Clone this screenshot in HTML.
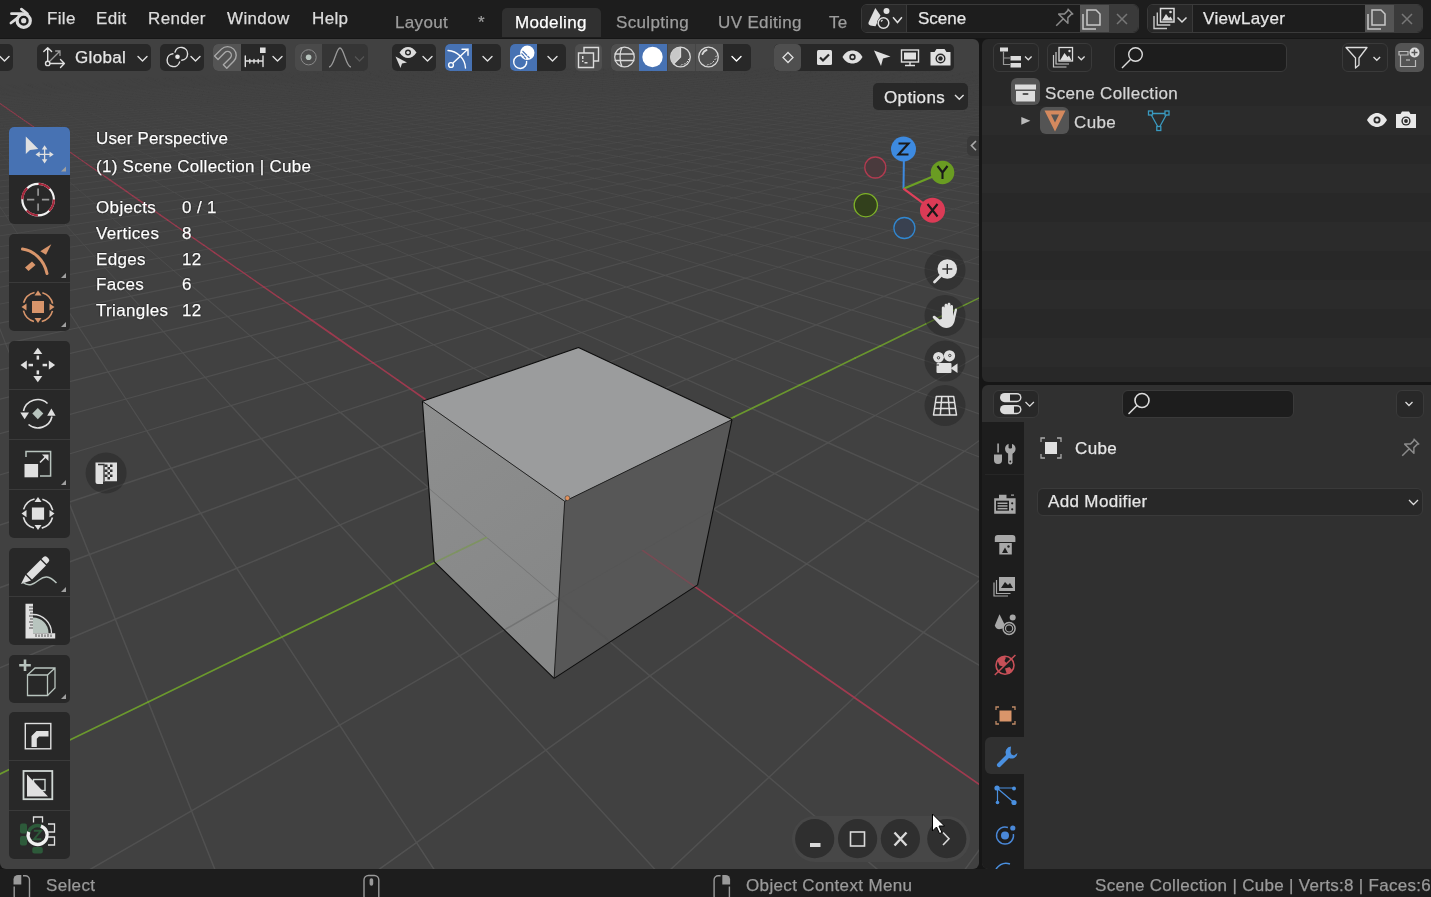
<!DOCTYPE html>
<html><head><meta charset="utf-8">
<style>
*{box-sizing:border-box;margin:0;padding:0}
html,body{-webkit-font-smoothing:antialiased;width:1431px;height:897px;overflow:hidden;background:#161616;font-family:"Liberation Sans",sans-serif;color:#e6e6e6}
.a{position:absolute}
.t{position:absolute;will-change:transform;-webkit-text-stroke:0.25px currentColor;margin-top:1px;white-space:pre;line-height:1;font-size:17px;letter-spacing:0.35px}
.ov{color:#fff;text-shadow:0 0 1.5px #000,0 0 1px #000}
#top{left:0;top:0;width:1431px;height:38px;background:#1d1d1d}
#vp{left:0;top:39px;width:979px;height:830px;background:#414141;border-radius:0 6px 6px 6px;overflow:hidden}
#ol{left:982px;top:39px;width:449px;height:343px;background:#282828;border-radius:6px 0 0 6px;overflow:hidden}
#pr{left:982px;top:385px;width:449px;height:484px;background:#303030;border-radius:6px 0 0 6px;overflow:hidden}
#sb{left:0;top:869px;width:1431px;height:28px;background:#1d1d1d}
.btn{position:absolute;background:#282828;border-radius:5px}
</style></head><body>
<div id="top" class="a">
<svg class="a" style="left:0;top:0" width="40" height="38">
<g stroke="#dcdcdc" stroke-width="2.8" stroke-linecap="round" fill="none">
<circle cx="23.7" cy="20.7" r="6.6" stroke-width="3.2"/>
<path d="M11.5 13.7H22M10.9 23L17 18.3M21.4 9.2L27.4 13.8"/>
</g><circle cx="23.7" cy="20.7" r="2.6" fill="#dcdcdc"/>
</svg>
<div class="t" style="left:47px;top:9px;color:#dcdcdc">File</div>
<div class="t" style="left:96px;top:9px;color:#dcdcdc">Edit</div>
<div class="t" style="left:148px;top:9px;color:#dcdcdc">Render</div>
<div class="t" style="left:227px;top:9px;color:#dcdcdc">Window</div>
<div class="t" style="left:312px;top:9px;color:#dcdcdc">Help</div>
<div class="a" style="left:502px;top:8px;width:99px;height:29px;background:#303030;border-radius:5px 5px 0 0"></div>
<div class="t" style="left:395px;top:13px;color:#9d9d9d">Layout</div>
<div class="t" style="left:478px;top:13px;color:#9d9d9d">*</div>
<div class="t" style="left:515px;top:13px;color:#ffffff">Modeling</div>
<div class="t" style="left:616px;top:13px;color:#9d9d9d">Sculpting</div>
<div class="t" style="left:718px;top:13px;color:#9d9d9d">UV Editing</div>
<div class="t" style="left:829px;top:13px;color:#9d9d9d">Te</div>
<!-- scene selector -->
<div class="a" style="left:861px;top:4px;width:278px;height:29px;border:1px solid #3a3a3a;border-radius:6px;background:#1d1d1d;overflow:hidden">
 <div class="a" style="left:0;top:0;width:45px;height:27px;background:#282828;border-right:1px solid #3a3a3a"></div>
 <div class="a" style="left:218px;top:0;width:29px;height:27px;background:#545454"></div>
 <div class="a" style="left:247px;top:0;width:30px;height:27px;background:#3a3a3a"></div>
</div>
<svg class="a" style="left:861px;top:4px" width="278" height="29">
 <path d="M14.3 4.1L7.6 18.3C6.8 20.5 8.5 22 14.5 22.2L19.5 11.5Z" fill="#e0e0e0"/>
 <circle cx="25.5" cy="6.9" r="3" fill="#e0e0e0"/>
 <circle cx="22.5" cy="19" r="6.4" fill="#282828"/>
 <circle cx="22.5" cy="19" r="5.3" fill="none" stroke="#e0e0e0" stroke-width="1.5"/>
 <path d="M20 17.5l1.5-1.5" stroke="#e0e0e0" stroke-width="1.2"/>
 <path d="M32 13.2l4.5 5.3 4.4-5.3" stroke="#e0e0e0" stroke-width="1.5" fill="none"/>
 <g transform="translate(203,14) rotate(45)" stroke="#8a8a8a" stroke-width="1.5" fill="none" stroke-linejoin="round"><path d="M-4 -9h8M-2.5 -9v6l-4 4h13l-4 -4v-6M0 1v10"/></g>
 <g stroke="#c8c8c8" stroke-width="1.5" fill="none"><path d="M222 10v15h13"/><path d="M226 6h9l4 4v11h-13z"/></g>
 <path d="M256 10l10 10M266 10l-10 10" stroke="#777" stroke-width="1.5"/>
</svg>
<div class="t" style="left:917.5px;top:9px;color:#e6e6e6;letter-spacing:0">Scene</div>
<!-- viewlayer selector -->
<div class="a" style="left:1147px;top:4px;width:276px;height:29px;border:1px solid #3a3a3a;border-radius:6px;background:#1d1d1d;overflow:hidden">
 <div class="a" style="left:0;top:0;width:45px;height:27px;background:#282828;border-right:1px solid #3a3a3a"></div>
 <div class="a" style="left:217px;top:0;width:29px;height:27px;background:#545454"></div>
 <div class="a" style="left:246px;top:0;width:30px;height:27px;background:#3a3a3a"></div>
</div>
<svg class="a" style="left:1147px;top:4px" width="276" height="29">
 <g stroke="#c8c8c8" stroke-width="1.4" fill="none"><path d="M7 12v12.5h13"/><path d="M10.3 8.5v12.5h13"/></g>
 <rect x="13.5" y="4.5" width="13.5" height="13.5" fill="#282828" stroke="#dcdcdc" stroke-width="1.5"/>
 <path d="M15 16.5L19 10L22 14L23.5 12.5L26 16.5Z" fill="#dcdcdc"/><circle cx="23.5" cy="8" r="1.3" fill="#dcdcdc"/>
 <path d="M30.5 13.5l4.5 4.5 4.5-4.5" stroke="#dcdcdc" stroke-width="1.5" fill="none"/>
 <g stroke="#c8c8c8" stroke-width="1.5" fill="none"><path d="M221 10v15h13"/><path d="M225 6h9l4 4v11h-13z"/></g>
 <path d="M255 10l10 10M265 10l-10 10" stroke="#777" stroke-width="1.5"/>
</svg>
<div class="t" style="left:1203px;top:9px;color:#e6e6e6">ViewLayer</div>
</div>
<div id="vp" class="a">
<svg class="a" style="left:0;top:0" width="979" height="830" viewBox="0 0 979 830">
<g id="gax"><g id="gridg" fill="none" stroke-width="1.2"><path d="M-9.8,45.3L6.3,44.4L22.1,43.5M-8.2,46.2L8.1,45.3L24.1,44.4L39.8,43.5L55.2,42.6L70.3,41.7L85.1,40.9L99.6,40.1L113.8,39.3M87.9,41.7L102.5,40.9L116.9,40.1L131.1,39.2L144.9,38.4L158.5,37.7L171.9,36.9L185.0,36.1M162.1,38.4L175.6,37.6L188.9,36.9L201.8,36.1L214.6,35.4L227.1,34.6M206.0,36.8L218.8,36.1L231.5,35.3L243.9,34.6L256.1,33.9L268.1,33.2M248.5,35.3L260.8,34.6L272.8,33.8L284.7,33.1L296.4,32.4M289.7,33.8L301.5,33.1L313.0,32.4L324.3,31.7M318.3,33.1L329.8,32.4L341.0,31.7L352.0,31.0M346.6,32.3L357.7,31.6L368.7,31.0L379.4,30.3M374.6,31.6L385.4,30.9L396.0,30.3L406.4,29.6M402.2,30.9L412.7,30.2L423.1,29.6L433.2,28.9M429.6,30.2L439.8,29.5L449.8,28.9M446.5,30.1L456.6,29.5L466.5,28.8L476.3,28.2M473.5,29.4L483.3,28.8L493.0,28.1M490.6,29.4L500.3,28.7L509.8,28.1M507.7,29.3L517.3,28.7L526.7,28.0L535.9,27.4M525.0,29.3L534.4,28.6L543.7,28.0L552.8,27.3M551.7,28.6L560.8,27.9L569.8,27.3M569.0,28.5L578.1,27.9L586.9,27.2M586.5,28.5L595.4,27.8L604.2,27.2M604.0,28.4L612.8,27.8L621.5,27.1M621.7,28.4L630.4,27.7L638.9,27.1M639.5,28.3L648.1,27.7L656.4,27.0M657.4,28.3L665.8,27.6L674.1,27.0M675.5,28.2L683.7,27.5M685.3,28.8L693.6,28.2L701.7,27.5M703.7,28.8L711.9,28.1L719.8,27.4M722.2,28.7L730.2,28.0L738.1,27.4M740.9,28.7L748.7,28.0M751.8,29.3L759.6,28.6L767.3,27.9M770.8,29.3L778.5,28.6L786.1,27.9M790.0,29.2L797.5,28.5M801.7,29.9L809.3,29.2L816.7,28.5M821.3,29.8L828.7,29.1L835.9,28.4M841.0,29.8L848.2,29.1M853.7,30.4L860.9,29.7L867.9,29.0M873.8,30.4L880.9,29.7M887.1,31.1L894.1,30.3L901.0,29.6M907.8,31.0L914.6,30.3M921.8,31.8L928.5,31.0L935.1,30.2M942.9,31.7L949.4,31.0M957.6,32.5L964.1,31.7L970.5,30.9M972.7,33.2L979.2,32.4L985.5,31.6M6.3,44.4L8.1,45.3M22.1,43.5L24.1,44.4M37.6,42.6L39.8,43.5L42.1,44.4M52.8,41.8L55.2,42.6L57.6,43.5M67.7,40.9L70.3,41.7L72.9,42.6M85.1,40.9L87.9,41.7M99.6,40.1L102.5,40.9M113.8,39.3L116.9,40.1M127.8,38.5L131.1,39.2L134.4,40.0M141.5,37.7L144.9,38.4L148.4,39.2M158.5,37.7L162.1,38.4M171.9,36.9L175.6,37.6M185.0,36.1L188.9,36.9L192.8,37.6M197.8,35.4L201.8,36.1L206.0,36.8M214.6,35.4L218.8,36.1M227.1,34.6L231.5,35.3L235.9,36.1M239.4,33.9L243.9,34.6L248.5,35.3M256.1,33.9L260.8,34.6M268.1,33.2L272.8,33.8L277.7,34.5M284.7,33.1L289.7,33.8M296.4,32.4L301.5,33.1L306.7,33.8M307.8,31.8L313.0,32.4L318.3,33.1M324.3,31.7L329.8,32.4M335.5,31.0L341.0,31.7L346.6,32.3M352.0,31.0L357.7,31.6M362.9,30.3L368.7,31.0L374.6,31.6M379.4,30.3L385.4,30.9M389.9,29.6L396.0,30.3L402.2,30.9M406.4,29.6L412.7,30.2L419.2,30.8M423.1,29.6L429.6,30.2M433.2,28.9L439.8,29.5L446.5,30.1M449.8,28.9L456.6,29.5L463.6,30.1M466.5,28.8L473.5,29.4M476.3,28.2L483.3,28.8L490.6,29.4M493.0,28.1L500.3,28.7L507.7,29.3M509.8,28.1L517.3,28.7L525.0,29.3M526.7,28.0L534.4,28.6M535.9,27.4L543.7,28.0L551.7,28.6M552.8,27.3L560.8,27.9L569.0,28.5M569.8,27.3L578.1,27.9L586.5,28.5M586.9,27.2L595.4,27.8L604.0,28.4M604.2,27.2L612.8,27.8L621.7,28.4M621.5,27.1L630.4,27.7L639.5,28.3M638.9,27.1L648.1,27.7L657.4,28.3M656.4,27.0L665.8,27.6L675.5,28.2L685.3,28.8M674.1,27.0L683.7,27.5L693.6,28.2L703.7,28.8M701.7,27.5L711.9,28.1L722.2,28.7M719.8,27.4L730.2,28.0L740.9,28.7M738.1,27.4L748.7,28.0L759.6,28.6L770.8,29.3M767.3,27.9L778.5,28.6L790.0,29.2M786.1,27.9L797.5,28.5L809.3,29.2L821.3,29.8M816.7,28.5L828.7,29.1L841.0,29.8L853.7,30.4M848.2,29.1L860.9,29.7L873.8,30.4L887.1,31.1M867.9,29.0L880.9,29.7L894.1,30.3L907.8,31.0L921.8,31.8M901.0,29.6L914.6,30.3L928.5,31.0L942.9,31.7L957.6,32.5M949.4,31.0L964.1,31.7L979.2,32.4L994.7,33.2" stroke="rgba(84,84,84,0.00)" stroke-width="0.9"/>
<path d="M-6.6,47.2L10.0,46.2L26.2,45.3L42.1,44.4L57.6,43.5L72.9,42.6L87.9,41.7M-22.0,49.2L-4.9,48.2L11.9,47.2L28.3,46.2L44.4,45.3L60.1,44.4L75.6,43.5L90.7,42.6L105.6,41.7L120.1,40.9L134.4,40.0L148.4,39.2L162.1,38.4M-20.5,50.2L-3.2,49.2L13.8,48.2L30.4,47.2L46.7,46.2L62.7,45.3L78.3,44.4L93.6,43.5L108.7,42.6L123.4,41.7L137.8,40.9L152.0,40.0L165.8,39.2L179.5,38.4L192.8,37.6L206.0,36.8M-19.0,51.3L-1.4,50.2L15.8,49.2L32.7,48.2L49.2,47.2L65.3,46.2L81.1,45.3L96.7,44.4L111.8,43.5L126.7,42.6L141.3,41.7L155.6,40.9L169.7,40.0L183.4,39.2L196.9,38.4L210.2,37.6L223.2,36.8L235.9,36.1L248.5,35.3M-17.4,52.4L0.4,51.3L17.9,50.3L35.0,49.2L51.7,48.2L68.0,47.2L84.1,46.3L99.7,45.3L115.1,44.4L130.2,43.5L144.9,42.6L159.4,41.7L173.6,40.8L187.5,40.0L201.1,39.2L214.5,38.4L227.6,37.6L240.5,36.8L253.2,36.0L265.6,35.3L277.7,34.5L289.7,33.8M-15.8,53.5L2.3,52.4L20.0,51.3L37.3,50.3L54.3,49.2L70.8,48.2L87.0,47.2L102.9,46.3L118.5,45.3L133.7,44.4L148.6,43.5L163.3,42.6L177.6,41.7L191.7,40.8L205.4,40.0L218.9,39.2L232.2,38.3L245.2,37.5L258.0,36.8L270.5,36.0L282.8,35.2L294.8,34.5L306.7,33.8L318.3,33.1M-14.1,54.7L4.3,53.6L22.2,52.4L39.8,51.4L56.9,50.3L73.7,49.3L90.1,48.2L106.2,47.2L121.9,46.3L137.4,45.3L152.5,44.4L167.2,43.5L181.7,42.6L195.9,41.7L209.9,40.8L223.5,40.0L236.9,39.1L250.0,38.3L262.9,37.5L275.5,36.7L287.9,36.0L300.1,35.2L312.0,34.5L323.8,33.7L335.3,33.0L346.6,32.3M-12.3,55.9L6.3,54.7L24.5,53.6L42.3,52.5L59.7,51.4L76.7,50.3L93.3,49.3L109.6,48.3L125.5,47.3L141.1,46.3L156.4,45.3L171.3,44.4L186.0,43.5L200.3,42.5L214.4,41.7L228.2,40.8L241.7,39.9L255.0,39.1L268.0,38.3L280.7,37.5L293.2,36.7L305.5,35.9L317.5,35.2L329.4,34.4L341.0,33.7L352.4,33.0L363.6,32.3L374.6,31.6M-10.5,57.2L8.4,56.0L26.8,54.8L44.8,53.6L62.5,52.5L79.7,51.4L96.6,50.3L113.0,49.3L129.2,48.3L145.0,47.3L160.4,46.3L175.5,45.3L190.3,44.4L204.9,43.4L219.1,42.5L233.0,41.7L246.6,40.8L260.0,39.9L273.2,39.1L286.0,38.3L298.6,37.5L311.0,36.7L323.2,35.9L335.1,35.2L346.8,34.4L358.3,33.7L369.6,33.0L380.7,32.3L391.5,31.6L402.2,30.9M10.5,57.2L29.2,56.0L47.5,54.8L65.4,53.7L82.9,52.5L99.9,51.4L116.6,50.4L133.0,49.3L148.9,48.3L164.6,47.3L179.9,46.3L194.8,45.3L209.5,44.4L223.9,43.4L237.9,42.5L251.7,41.6L265.2,40.8L278.5,39.9L291.5,39.1L304.2,38.3L316.7,37.5L329.0,36.7L341.0,35.9L352.8,35.1L364.4,34.4L375.7,33.6L386.9,32.9L397.8,32.2L408.6,31.5L419.2,30.8L429.6,30.2M120.3,51.5L136.8,50.4L153.0,49.3L168.8,48.3L184.3,47.3L199.5,46.3L214.3,45.3L228.8,44.4L243.0,43.4L257.0,42.5L270.6,41.6L284.0,40.8L297.1,39.9L309.9,39.1L322.5,38.2L334.9,37.4L347.0,36.6L358.9,35.9L370.6,35.1L382.0,34.3L393.3,33.6L404.3,32.9L415.1,32.2L425.8,31.5L436.2,30.8L446.5,30.1M188.9,48.3L204.2,47.3L219.2,46.3L233.9,45.3L248.2,44.4L262.3,43.4L276.1,42.5L289.6,41.6L302.8,40.7L315.8,39.9L328.5,39.0L341.0,38.2L353.2,37.4L365.2,36.6L376.9,35.8L388.5,35.1L399.8,34.3L410.9,33.6L421.8,32.8L432.6,32.1L443.1,31.4L453.4,30.7L463.6,30.1L473.5,29.4M253.6,45.3L267.8,44.4L281.8,43.4L295.4,42.5L308.7,41.6L321.8,40.7L334.7,39.9L347.2,39.0L359.5,38.2L371.6,37.4L383.5,36.6L395.1,35.8L406.5,35.0L417.7,34.3L428.7,33.5L439.5,32.8L450.1,32.1L460.5,31.4L470.7,30.7L480.7,30.0L490.6,29.4M287.6,44.4L301.3,43.4L314.8,42.5L328.0,41.6L341.0,40.7L353.6,39.9L366.1,39.0L378.3,38.2L390.2,37.4L401.9,36.6L413.4,35.8L424.7,35.0L435.7,34.2L446.6,33.5L457.3,32.8L467.7,32.1L478.0,31.4L488.1,30.7L498.0,30.0L507.7,29.3M321.1,43.4L334.4,42.5L347.5,41.6L360.2,40.7L372.8,39.8L385.1,39.0L397.1,38.1L408.9,37.3L420.5,36.5L431.8,35.7L443.0,35.0L453.9,34.2L464.6,33.5L475.1,32.7L485.5,32.0L495.6,31.3L505.6,30.6L515.4,29.9L525.0,29.3M354.1,42.5L367.0,41.6L379.7,40.7L392.0,39.8L404.2,39.0L416.1,38.1L427.7,37.3L439.2,36.5L450.4,35.7L461.4,34.9L472.2,34.2L482.7,33.4L493.1,32.7L503.3,32.0L513.4,31.3L523.2,30.6L532.9,29.9L542.3,29.2L551.7,28.6M386.7,41.6L399.2,40.7L411.4,39.8L423.4,38.9L435.2,38.1L446.7,37.3L458.0,36.5L469.0,35.7L479.9,34.9L490.5,34.1L501.0,33.4L511.3,32.7L521.3,31.9L531.2,31.2L540.9,30.5L550.5,29.8L559.8,29.2L569.0,28.5M418.9,40.7L431.0,39.8L442.8,38.9L454.4,38.1L465.8,37.3L476.9,36.4L487.8,35.6L498.6,34.9L509.1,34.1L519.4,33.4L529.5,32.6L539.4,31.9L549.2,31.2L558.8,30.5L568.2,29.8L577.4,29.1L586.5,28.5M450.7,39.8L462.4,38.9L473.8,38.1L485.0,37.2L496.0,36.4L506.8,35.6L517.3,34.8L527.7,34.1L537.9,33.3L547.9,32.6L557.7,31.8L567.3,31.1L576.7,30.4L586.0,29.7L595.1,29.1L604.0,28.4M470.5,39.8L482.0,38.9L493.3,38.0L504.4,37.2L515.2,36.4L525.8,35.6L536.3,34.8L546.5,34.0L556.5,33.3L566.4,32.5L576.0,31.8L585.5,31.1L594.8,30.4L603.9,29.7L612.9,29.0L621.7,28.4M490.5,39.7L501.9,38.9L513.0,38.0L523.9,37.2L534.6,36.4L545.0,35.6L555.3,34.8L565.4,34.0L575.3,33.2L585.0,32.5L594.5,31.8L603.8,31.0L613.0,30.3L622.0,29.7L630.8,29.0L639.5,28.3M521.8,38.8L532.8,38.0L543.5,37.2L554.0,36.3L564.4,35.5L574.5,34.7L584.4,34.0L594.2,33.2L603.7,32.5L613.1,31.7L622.3,31.0L631.3,30.3L640.2,29.6L648.9,28.9L657.4,28.3M541.9,38.8L552.7,38.0L563.3,37.1L573.7,36.3L583.8,35.5L593.8,34.7L603.6,33.9L613.2,33.2L622.6,32.4L631.8,31.7L640.9,31.0L649.7,30.3L658.5,29.6L667.0,28.9L675.5,28.2M562.2,38.8L572.8,37.9L583.2,37.1L593.4,36.3L603.4,35.5L613.3,34.7L622.9,33.9L632.3,33.1L641.6,32.4L650.6,31.6L659.6,30.9L668.3,30.2L676.9,29.5L685.3,28.8M582.6,38.8L593.1,37.9L603.3,37.1L613.4,36.2L623.2,35.4L632.8,34.6L642.3,33.8L651.6,33.1L660.7,32.3L669.6,31.6L678.4,30.9L687.0,30.2L695.4,29.5L703.7,28.8M603.2,38.8L613.5,37.9L623.5,37.0L633.4,36.2L643.1,35.4L652.6,34.6L661.9,33.8L671.0,33.0L679.9,32.3L688.7,31.5L697.3,30.8L705.8,30.1L714.1,29.4L722.2,28.7M623.9,38.7L634.0,37.9L643.9,37.0L653.6,36.2L663.1,35.4L672.4,34.6L681.6,33.8L690.5,33.0L699.3,32.2L708.0,31.5L716.4,30.8L724.7,30.1L732.9,29.4L740.9,28.7M644.8,38.7L654.7,37.8L664.4,37.0L673.9,36.2L683.3,35.3L692.4,34.5L701.4,33.7L710.2,33.0L718.9,32.2L727.3,31.5L735.6,30.7L743.8,30.0L751.8,29.3M665.8,38.7L675.5,37.8L685.1,37.0L694.4,36.1L703.6,35.3L712.6,34.5L721.4,33.7L730.0,32.9L738.5,32.2L746.8,31.4L755.0,30.7L763.0,30.0L770.8,29.3M687.0,38.7L696.5,37.8L705.9,36.9L715.1,36.1L724.1,35.3L732.9,34.5L741.5,33.7L750.0,32.9L758.3,32.1L766.5,31.4L774.4,30.6L782.3,29.9L790.0,29.2M708.3,38.7L717.7,37.8L726.9,36.9L735.9,36.1L744.7,35.2L753.3,34.4L761.8,33.6L770.1,32.8L778.2,32.1L786.2,31.3L794.0,30.6L801.7,29.9M720.4,39.5L729.8,38.6L739.0,37.7L748.0,36.9L756.8,36.0L765.5,35.2L773.9,34.4L782.2,33.6L790.3,32.8L798.3,32.0L806.1,31.3L813.8,30.5L821.3,29.8M742.3,39.5L751.5,38.6L760.5,37.7L769.3,36.9L777.9,36.0L786.4,35.2L794.7,34.3L802.8,33.5L810.7,32.8L818.5,32.0L826.2,31.2L833.7,30.5L841.0,29.8M764.3,39.5L773.3,38.6L782.1,37.7L790.7,36.8L799.2,36.0L807.5,35.1L815.5,34.3L823.5,33.5L831.3,32.7L838.9,31.9L846.4,31.2L853.7,30.4M777.6,40.4L786.6,39.5L795.3,38.6L803.9,37.7L812.4,36.8L820.6,35.9L828.7,35.1L836.6,34.3L844.3,33.5L851.9,32.7L859.4,31.9L866.7,31.1L873.8,30.4M800.2,40.4L808.9,39.5L817.5,38.5L825.9,37.6L834.1,36.8L842.2,35.9L850.1,35.1L857.8,34.2L865.3,33.4L872.8,32.6L880.0,31.9L887.1,31.1M822.9,40.4L831.5,39.4L839.9,38.5L848.1,37.6L856.1,36.7L863.9,35.9L871.6,35.0L879.1,34.2L886.5,33.4L893.7,32.6L900.8,31.8L907.8,31.0M837.4,41.3L845.9,40.4L854.2,39.4L862.4,38.5L870.4,37.6L878.2,36.7L885.8,35.8L893.3,35.0L900.6,34.2L907.8,33.3L914.9,32.5L921.8,31.8M860.7,41.3L869.0,40.4L877.2,39.4L885.1,38.5L892.9,37.6L900.5,36.7L907.9,35.8L915.2,35.0L922.3,34.1L929.3,33.3L936.1,32.5L942.9,31.7M876.1,42.3L884.3,41.3L892.4,40.3L900.3,39.4L908.0,38.5L915.5,37.5L922.9,36.6L930.1,35.8L937.2,34.9L944.1,34.1L950.9,33.3L957.6,32.5M900.0,42.3L908.0,41.3L915.9,40.3L923.5,39.4L931.0,38.4L938.4,37.5L945.5,36.6L952.5,35.7L959.4,34.9L966.1,34.0L972.7,33.2M916.3,43.3L924.2,42.3L932.0,41.3L939.6,40.3L947.0,39.3L954.3,38.4L961.4,37.5L968.3,36.6L975.1,35.7L981.8,34.8L988.3,34.0M940.9,43.3L948.6,42.3L956.1,41.3L963.5,40.3L970.7,39.3L977.7,38.4L984.6,37.5M958.1,44.4L965.7,43.3L973.2,42.3L980.5,41.3L987.6,40.3M983.5,44.4L990.8,43.3M-6.6,47.2L-4.9,48.2L-3.2,49.2L-1.4,50.2L0.4,51.3L2.3,52.4L4.3,53.6L6.3,54.7L8.4,56.0L10.5,57.2M8.1,45.3L10.0,46.2L11.9,47.2L13.8,48.2L15.8,49.2L17.9,50.3L20.0,51.3L22.2,52.4L24.5,53.6L26.8,54.8L29.2,56.0M24.1,44.4L26.2,45.3L28.3,46.2L30.4,47.2L32.7,48.2L35.0,49.2L37.3,50.3L39.8,51.4L42.3,52.5L44.8,53.6L47.5,54.8M42.1,44.4L44.4,45.3L46.7,46.2L49.2,47.2L51.7,48.2L54.3,49.2L56.9,50.3L59.7,51.4L62.5,52.5L65.4,53.7M57.6,43.5L60.1,44.4L62.7,45.3L65.3,46.2L68.0,47.2L70.8,48.2L73.7,49.3L76.7,50.3L79.7,51.4L82.9,52.5L86.1,53.7M72.9,42.6L75.6,43.5L78.3,44.4L81.1,45.3L84.1,46.3L87.0,47.2L90.1,48.2L93.3,49.3L96.6,50.3L99.9,51.4L103.4,52.6M87.9,41.7L90.7,42.6L93.6,43.5L96.7,44.4L99.7,45.3L102.9,46.3L106.2,47.2L109.6,48.3L113.0,49.3L116.6,50.4L120.3,51.5M102.5,40.9L105.6,41.7L108.7,42.6L111.8,43.5L115.1,44.4L118.5,45.3L121.9,46.3L125.5,47.3L129.2,48.3L133.0,49.3L136.8,50.4M116.9,40.1L120.1,40.9L123.4,41.7L126.7,42.6L130.2,43.5L133.7,44.4L137.4,45.3L141.1,46.3L145.0,47.3L148.9,48.3L153.0,49.3M134.4,40.0L137.8,40.9L141.3,41.7L144.9,42.6L148.6,43.5L152.5,44.4L156.4,45.3L160.4,46.3L164.6,47.3L168.8,48.3L173.2,49.4M148.4,39.2L152.0,40.0L155.6,40.9L159.4,41.7L163.3,42.6L167.2,43.5L171.3,44.4L175.5,45.3L179.9,46.3L184.3,47.3L188.9,48.3M162.1,38.4L165.8,39.2L169.7,40.0L173.6,40.8L177.6,41.7L181.7,42.6L186.0,43.5L190.3,44.4L194.8,45.3L199.5,46.3L204.2,47.3M175.6,37.6L179.5,38.4L183.4,39.2L187.5,40.0L191.7,40.8L195.9,41.7L200.3,42.5L204.9,43.4L209.5,44.4L214.3,45.3L219.2,46.3M192.8,37.6L196.9,38.4L201.1,39.2L205.4,40.0L209.9,40.8L214.4,41.7L219.1,42.5L223.9,43.4L228.8,44.4L233.9,45.3L239.1,46.3M206.0,36.8L210.2,37.6L214.5,38.4L218.9,39.2L223.5,40.0L228.2,40.8L233.0,41.7L237.9,42.5L243.0,43.4L248.2,44.4L253.6,45.3M218.8,36.1L223.2,36.8L227.6,37.6L232.2,38.3L236.9,39.1L241.7,39.9L246.6,40.8L251.7,41.6L257.0,42.5L262.3,43.4L267.8,44.4L273.5,45.3M235.9,36.1L240.5,36.8L245.2,37.5L250.0,38.3L255.0,39.1L260.0,39.9L265.2,40.8L270.6,41.6L276.1,42.5L281.8,43.4L287.6,44.4M248.5,35.3L253.2,36.0L258.0,36.8L262.9,37.5L268.0,38.3L273.2,39.1L278.5,39.9L284.0,40.8L289.6,41.6L295.4,42.5L301.3,43.4M260.8,34.6L265.6,35.3L270.5,36.0L275.5,36.7L280.7,37.5L286.0,38.3L291.5,39.1L297.1,39.9L302.8,40.7L308.7,41.6L314.8,42.5L321.1,43.4M277.7,34.5L282.8,35.2L287.9,36.0L293.2,36.7L298.6,37.5L304.2,38.3L309.9,39.1L315.8,39.9L321.8,40.7L328.0,41.6L334.4,42.5M289.7,33.8L294.8,34.5L300.1,35.2L305.5,35.9L311.0,36.7L316.7,37.5L322.5,38.2L328.5,39.0L334.7,39.9L341.0,40.7L347.5,41.6L354.1,42.5M306.7,33.8L312.0,34.5L317.5,35.2L323.2,35.9L329.0,36.7L334.9,37.4L341.0,38.2L347.2,39.0L353.6,39.9L360.2,40.7L367.0,41.6M318.3,33.1L323.8,33.7L329.4,34.4L335.1,35.2L341.0,35.9L347.0,36.6L353.2,37.4L359.5,38.2L366.1,39.0L372.8,39.8L379.7,40.7L386.7,41.6M329.8,32.4L335.3,33.0L341.0,33.7L346.8,34.4L352.8,35.1L358.9,35.9L365.2,36.6L371.6,37.4L378.3,38.2L385.1,39.0L392.0,39.8L399.2,40.7M346.6,32.3L352.4,33.0L358.3,33.7L364.4,34.4L370.6,35.1L376.9,35.8L383.5,36.6L390.2,37.4L397.1,38.1L404.2,39.0L411.4,39.8L418.9,40.7M357.7,31.6L363.6,32.3L369.6,33.0L375.7,33.6L382.0,34.3L388.5,35.1L395.1,35.8L401.9,36.6L408.9,37.3L416.1,38.1L423.4,38.9L431.0,39.8L438.8,40.7M374.6,31.6L380.7,32.3L386.9,32.9L393.3,33.6L399.8,34.3L406.5,35.0L413.4,35.8L420.5,36.5L427.7,37.3L435.2,38.1L442.8,38.9L450.7,39.8M385.4,30.9L391.5,31.6L397.8,32.2L404.3,32.9L410.9,33.6L417.7,34.3L424.7,35.0L431.8,35.7L439.2,36.5L446.7,37.3L454.4,38.1L462.4,38.9L470.5,39.8M402.2,30.9L408.6,31.5L415.1,32.2L421.8,32.8L428.7,33.5L435.7,34.2L443.0,35.0L450.4,35.7L458.0,36.5L465.8,37.3L473.8,38.1L482.0,38.9L490.5,39.7M419.2,30.8L425.8,31.5L432.6,32.1L439.5,32.8L446.6,33.5L453.9,34.2L461.4,34.9L469.0,35.7L476.9,36.4L485.0,37.2L493.3,38.0L501.9,38.9M429.6,30.2L436.2,30.8L443.1,31.4L450.1,32.1L457.3,32.8L464.6,33.5L472.2,34.2L479.9,34.9L487.8,35.6L496.0,36.4L504.4,37.2L513.0,38.0L521.8,38.8M446.5,30.1L453.4,30.7L460.5,31.4L467.7,32.1L475.1,32.7L482.7,33.4L490.5,34.1L498.6,34.9L506.8,35.6L515.2,36.4L523.9,37.2L532.8,38.0L541.9,38.8M463.6,30.1L470.7,30.7L478.0,31.4L485.5,32.0L493.1,32.7L501.0,33.4L509.1,34.1L517.3,34.8L525.8,35.6L534.6,36.4L543.5,37.2L552.7,38.0L562.2,38.8M473.5,29.4L480.7,30.0L488.1,30.7L495.6,31.3L503.3,32.0L511.3,32.7L519.4,33.4L527.7,34.1L536.3,34.8L545.0,35.6L554.0,36.3L563.3,37.1L572.8,37.9L582.6,38.8M490.6,29.4L498.0,30.0L505.6,30.6L513.4,31.3L521.3,31.9L529.5,32.6L537.9,33.3L546.5,34.0L555.3,34.8L564.4,35.5L573.7,36.3L583.2,37.1L593.1,37.9L603.2,38.8M507.7,29.3L515.4,29.9L523.2,30.6L531.2,31.2L539.4,31.9L547.9,32.6L556.5,33.3L565.4,34.0L574.5,34.7L583.8,35.5L593.4,36.3L603.3,37.1L613.5,37.9L623.9,38.7M525.0,29.3L532.9,29.9L540.9,30.5L549.2,31.2L557.7,31.8L566.4,32.5L575.3,33.2L584.4,34.0L593.8,34.7L603.4,35.5L613.4,36.2L623.5,37.0L634.0,37.9L644.8,38.7M534.4,28.6L542.3,29.2L550.5,29.8L558.8,30.5L567.3,31.1L576.0,31.8L585.0,32.5L594.2,33.2L603.6,33.9L613.3,34.7L623.2,35.4L633.4,36.2L643.9,37.0L654.7,37.8L665.8,38.7M551.7,28.6L559.8,29.2L568.2,29.8L576.7,30.4L585.5,31.1L594.5,31.8L603.7,32.5L613.2,33.2L622.9,33.9L632.8,34.6L643.1,35.4L653.6,36.2L664.4,37.0L675.5,37.8L687.0,38.7M569.0,28.5L577.4,29.1L586.0,29.7L594.8,30.4L603.8,31.0L613.1,31.7L622.6,32.4L632.3,33.1L642.3,33.8L652.6,34.6L663.1,35.4L673.9,36.2L685.1,37.0L696.5,37.8L708.3,38.7L720.4,39.5M586.5,28.5L595.1,29.1L603.9,29.7L613.0,30.3L622.3,31.0L631.8,31.7L641.6,32.4L651.6,33.1L661.9,33.8L672.4,34.6L683.3,35.3L694.4,36.1L705.9,36.9L717.7,37.8L729.8,38.6L742.3,39.5M604.0,28.4L612.9,29.0L622.0,29.7L631.3,30.3L640.9,31.0L650.6,31.6L660.7,32.3L671.0,33.0L681.6,33.8L692.4,34.5L703.6,35.3L715.1,36.1L726.9,36.9L739.0,37.7L751.5,38.6L764.3,39.5M621.7,28.4L630.8,29.0L640.2,29.6L649.7,30.3L659.6,30.9L669.6,31.6L679.9,32.3L690.5,33.0L701.4,33.7L712.6,34.5L724.1,35.3L735.9,36.1L748.0,36.9L760.5,37.7L773.3,38.6L786.6,39.5L800.2,40.4M639.5,28.3L648.9,28.9L658.5,29.6L668.3,30.2L678.4,30.9L688.7,31.5L699.3,32.2L710.2,33.0L721.4,33.7L732.9,34.5L744.7,35.2L756.8,36.0L769.3,36.9L782.1,37.7L795.3,38.6L808.9,39.5L822.9,40.4L837.4,41.3M657.4,28.3L667.0,28.9L676.9,29.5L687.0,30.2L697.3,30.8L708.0,31.5L718.9,32.2L730.0,32.9L741.5,33.7L753.3,34.4L765.5,35.2L777.9,36.0L790.7,36.8L803.9,37.7L817.5,38.5L831.5,39.4L845.9,40.4L860.7,41.3M685.3,28.8L695.4,29.5L705.8,30.1L716.4,30.8L727.3,31.5L738.5,32.2L750.0,32.9L761.8,33.6L773.9,34.4L786.4,35.2L799.2,36.0L812.4,36.8L825.9,37.6L839.9,38.5L854.2,39.4L869.0,40.4L884.3,41.3L900.0,42.3M703.7,28.8L714.1,29.4L724.7,30.1L735.6,30.7L746.8,31.4L758.3,32.1L770.1,32.8L782.2,33.6L794.7,34.3L807.5,35.1L820.6,35.9L834.1,36.8L848.1,37.6L862.4,38.5L877.2,39.4L892.4,40.3L908.0,41.3L924.2,42.3L940.9,43.3L958.1,44.4M722.2,28.7L732.9,29.4L743.8,30.0L755.0,30.7L766.5,31.4L778.2,32.1L790.3,32.8L802.8,33.5L815.5,34.3L828.7,35.1L842.2,35.9L856.1,36.7L870.4,37.6L885.1,38.5L900.3,39.4L915.9,40.3L932.0,41.3L948.6,42.3L965.7,43.3L983.5,44.4L1001.7,45.5M740.9,28.7L751.8,29.3L763.0,30.0L774.4,30.6L786.2,31.3L798.3,32.0L810.7,32.8L823.5,33.5L836.6,34.3L850.1,35.1L863.9,35.9L878.2,36.7L892.9,37.6L908.0,38.5L923.5,39.4L939.6,40.3L956.1,41.3L973.2,42.3L990.8,43.3M770.8,29.3L782.3,29.9L794.0,30.6L806.1,31.3L818.5,32.0L831.3,32.7L844.3,33.5L857.8,34.2L871.6,35.0L885.8,35.8L900.5,36.7L915.5,37.5L931.0,38.4L947.0,39.3L963.5,40.3L980.5,41.3L998.0,42.3M790.0,29.2L801.7,29.9L813.8,30.5L826.2,31.2L838.9,31.9L851.9,32.7L865.3,33.4L879.1,34.2L893.3,35.0L907.9,35.8L922.9,36.6L938.4,37.5L954.3,38.4L970.7,39.3L987.6,40.3M821.3,29.8L833.7,30.5L846.4,31.2L859.4,31.9L872.8,32.6L886.5,33.4L900.6,34.2L915.2,35.0L930.1,35.8L945.5,36.6L961.4,37.5L977.7,38.4L994.5,39.3M853.7,30.4L866.7,31.1L880.0,31.9L893.7,32.6L907.8,33.3L922.3,34.1L937.2,34.9L952.5,35.7L968.3,36.6L984.6,37.5M887.1,31.1L900.8,31.8L914.9,32.5L929.3,33.3L944.1,34.1L959.4,34.9L975.1,35.7L991.3,36.6M921.8,31.8L936.1,32.5L950.9,33.3L966.1,34.0L981.8,34.8L997.9,35.7M957.6,32.5L972.7,33.2L988.3,34.0" stroke="rgba(84,84,84,0.05)" stroke-width="0.9"/>
<path d="M-8.7,58.5L10.5,57.2M-6.8,59.8L12.7,58.5L31.7,57.3L50.3,56.1L68.4,54.9L86.1,53.7L103.4,52.6L120.3,51.5M-25.0,62.5L-4.8,61.2L15.0,59.9L34.3,58.6L53.1,57.3L71.5,56.1L89.4,54.9L107.0,53.8L124.1,52.6L140.9,51.5L157.2,50.4L173.2,49.4L188.9,48.3M-23.3,64.0L-2.7,62.6L17.4,61.2L36.9,59.9L56.0,58.6L74.7,57.4L92.9,56.2L110.7,55.0L128.0,53.8L145.0,52.6L161.6,51.5L177.8,50.4L193.6,49.4L209.1,48.3L224.3,47.3L239.1,46.3L253.6,45.3M-21.5,65.5L-0.6,64.1L19.8,62.7L39.7,61.3L59.1,60.0L78.0,58.7L96.5,57.4L114.5,56.2L132.1,55.0L149.3,53.8L166.0,52.7L182.4,51.6L198.5,50.5L214.2,49.4L229.5,48.3L244.5,47.3L259.2,46.3L273.5,45.3L287.6,44.4M-19.7,67.1L1.6,65.6L22.3,64.2L42.5,62.8L62.2,61.4L81.4,60.1L100.1,58.8L118.4,57.5L136.2,56.3L153.7,55.0L170.7,53.9L187.3,52.7L203.5,51.6L219.4,50.5L234.9,49.4L250.0,48.4L264.9,47.3L279.4,46.3L293.6,45.3L307.5,44.4L321.1,43.4M-17.7,68.7L3.9,67.2L25.0,65.7L45.5,64.3L65.5,62.8L84.9,61.5L103.9,60.1L122.5,58.8L140.6,57.6L158.2,56.3L175.4,55.1L192.2,53.9L208.7,52.8L224.7,51.6L240.4,50.5L255.7,49.4L270.7,48.4L285.4,47.3L299.7,46.3L313.8,45.3L327.5,44.4L341.0,43.4L354.1,42.5M88.6,62.9L107.9,61.6L126.7,60.2L145.0,58.9L162.9,57.6L180.4,56.4L197.4,55.1L214.0,53.9L230.3,52.8L246.1,51.6L261.6,50.5L276.8,49.5L291.6,48.4L306.1,47.4L320.3,46.3L334.1,45.3L347.7,44.4L361.0,43.4L374.0,42.5L386.7,41.6M185.4,57.7L202.7,56.4L219.5,55.2L236.0,54.0L252.0,52.8L267.7,51.7L283.0,50.6L298.0,49.5L312.6,48.4L327.0,47.4L341.0,46.3L354.7,45.3L368.1,44.4L381.2,43.4L394.0,42.5L406.6,41.6L418.9,40.7M241.9,55.2L258.1,54.0L274.0,52.9L289.5,51.7L304.6,50.6L319.4,49.5L333.8,48.4L348.0,47.4L361.8,46.4L375.3,45.3L388.6,44.4L401.5,43.4L414.2,42.5L426.6,41.6L438.8,40.7L450.7,39.8M296.1,52.9L311.4,51.7L326.3,50.6L340.9,49.5L355.2,48.4L369.2,47.4L382.8,46.4L396.2,45.4L409.2,44.4L422.0,43.4L434.5,42.5L446.8,41.5L458.8,40.6L470.5,39.8M333.5,51.8L348.3,50.6L362.7,49.5L376.8,48.5L390.5,47.4L404.0,46.4L417.2,45.4L430.1,44.4L442.7,43.4L455.0,42.5L467.1,41.5L478.9,40.6L490.5,39.7M370.4,50.7L384.6,49.6L398.5,48.5L412.1,47.4L425.4,46.4L438.3,45.4L451.0,44.4L463.5,43.4L475.6,42.4L487.6,41.5L499.2,40.6L510.6,39.7L521.8,38.8M406.7,49.6L420.4,48.5L433.8,47.4L446.9,46.4L459.7,45.4L472.2,44.4L484.5,43.4L496.4,42.4L508.2,41.5L519.7,40.6L530.9,39.7L541.9,38.8M429.0,49.6L442.5,48.5L455.7,47.4L468.6,46.4L481.2,45.4L493.5,44.4L505.6,43.4L517.4,42.4L529.0,41.5L540.3,40.6L551.3,39.7L562.2,38.8M464.8,48.5L477.8,47.4L490.5,46.4L502.9,45.4L515.0,44.4L526.9,43.4L538.5,42.4L549.9,41.5L561.0,40.6L571.9,39.7L582.6,38.8M487.2,48.5L500.0,47.5L512.5,46.4L524.7,45.4L536.7,44.4L548.4,43.4L559.8,42.4L571.0,41.5L581.9,40.6L592.7,39.6L603.2,38.8M522.4,47.5L534.7,46.4L546.7,45.4L558.5,44.4L570.0,43.4L581.2,42.4L592.2,41.5L603.0,40.5L613.6,39.6L623.9,38.7M545.1,47.5L557.1,46.4L569.0,45.4L580.5,44.4L591.8,43.4L602.9,42.4L613.7,41.5L624.3,40.5L634.6,39.6L644.8,38.7M567.9,47.5L579.7,46.4L591.3,45.4L602.7,44.4L613.8,43.4L624.6,42.4L635.3,41.4L645.7,40.5L655.8,39.6L665.8,38.7M590.9,47.5L602.5,46.4L613.9,45.4L625.0,44.4L635.9,43.4L646.6,42.4L657.0,41.4L667.2,40.5L677.2,39.6L687.0,38.7M614.0,47.5L625.5,46.4L636.7,45.4L647.6,44.4L658.3,43.4L668.7,42.4L678.9,41.4L688.9,40.5L698.7,39.6L708.3,38.7M637.4,47.5L648.6,46.5L659.6,45.4L670.3,44.4L680.8,43.4L691.0,42.4L701.0,41.4L710.8,40.5L720.4,39.5M661.0,47.5L672.0,46.5L682.7,45.4L693.2,44.4L703.5,43.4L713.5,42.4L723.3,41.4L732.9,40.4L742.3,39.5M684.8,47.6L695.5,46.5L706.1,45.4L716.3,44.4L726.4,43.3L736.2,42.4L745.8,41.4L755.2,40.4L764.3,39.5M698.0,48.7L708.8,47.6L719.3,46.5L729.6,45.4L739.6,44.4L749.4,43.3L759.0,42.3L768.4,41.4L777.6,40.4M722.4,48.7L732.9,47.6L743.2,46.5L753.3,45.4L763.1,44.4L772.7,43.3L782.0,42.3L791.2,41.4L800.2,40.4M747.1,48.7L757.3,47.6L767.4,46.5L777.2,45.4L786.8,44.4L796.1,43.3L805.3,42.3L814.2,41.3L822.9,40.4M771.9,48.8L781.9,47.6L791.7,46.5L801.3,45.4L810.6,44.4L819.8,43.3L828.7,42.3L837.4,41.3M787.0,49.9L797.0,48.8L806.8,47.6L816.3,46.5L825.6,45.4L834.7,44.4L843.6,43.3L852.3,42.3L860.7,41.3M812.6,50.0L822.3,48.8L831.8,47.6L841.1,46.5L850.1,45.4L859.0,44.4L867.6,43.3L876.1,42.3M838.4,50.0L847.8,48.8L857.1,47.7L866.1,46.5L874.9,45.4L883.4,44.4L891.8,43.3L900.0,42.3M855.0,51.2L864.4,50.0L873.6,48.8L882.5,47.7L891.3,46.5L899.8,45.4L908.1,44.4L916.3,43.3M881.5,51.3L890.7,50.0L899.5,48.8L908.2,47.7L916.7,46.6L925.0,45.4L933.0,44.4L940.9,43.3M899.3,52.6L908.3,51.3L917.2,50.1L925.8,48.9L934.2,47.7L942.3,46.6L950.3,45.4L958.1,44.4M926.6,52.6L935.4,51.3L943.9,50.1L952.2,48.9L960.3,47.7L968.2,46.6L975.9,45.5L983.5,44.4M945.6,53.9L954.2,52.6L962.7,51.4L970.9,50.1L978.9,48.9L986.7,47.7M965.3,55.3L973.8,54.0L982.1,52.7L990.2,51.4M10.5,57.2L12.7,58.5L15.0,59.9L17.4,61.2L19.8,62.7L22.3,64.2L25.0,65.7L27.7,67.3M29.2,56.0L31.7,57.3L34.3,58.6L36.9,59.9L39.7,61.3L42.5,62.8L45.5,64.3L48.5,65.8M47.5,54.8L50.3,56.1L53.1,57.3L56.0,58.6L59.1,60.0L62.2,61.4L65.5,62.8L68.8,64.4M65.4,53.7L68.4,54.9L71.5,56.1L74.7,57.4L78.0,58.7L81.4,60.1L84.9,61.5L88.6,62.9M86.1,53.7L89.4,54.9L92.9,56.2L96.5,57.4L100.1,58.8L103.9,60.1L107.9,61.6M103.4,52.6L107.0,53.8L110.7,55.0L114.5,56.2L118.4,57.5L122.5,58.8L126.7,60.2M120.3,51.5L124.1,52.6L128.0,53.8L132.1,55.0L136.2,56.3L140.6,57.6L145.0,58.9L149.6,60.3M136.8,50.4L140.9,51.5L145.0,52.6L149.3,53.8L153.7,55.0L158.2,56.3L162.9,57.6L167.8,59.0M153.0,49.3L157.2,50.4L161.6,51.5L166.0,52.7L170.7,53.9L175.4,55.1L180.4,56.4L185.4,57.7M173.2,49.4L177.8,50.4L182.4,51.6L187.3,52.7L192.2,53.9L197.4,55.1L202.7,56.4M188.9,48.3L193.6,49.4L198.5,50.5L203.5,51.6L208.7,52.8L214.0,53.9L219.5,55.2L225.2,56.5M204.2,47.3L209.1,48.3L214.2,49.4L219.4,50.5L224.7,51.6L230.3,52.8L236.0,54.0L241.9,55.2M219.2,46.3L224.3,47.3L229.5,48.3L234.9,49.4L240.4,50.5L246.1,51.6L252.0,52.8L258.1,54.0M239.1,46.3L244.5,47.3L250.0,48.4L255.7,49.4L261.6,50.5L267.7,51.7L274.0,52.9L280.4,54.1M253.6,45.3L259.2,46.3L264.9,47.3L270.7,48.4L276.8,49.5L283.0,50.6L289.5,51.7L296.1,52.9M273.5,45.3L279.4,46.3L285.4,47.3L291.6,48.4L298.0,49.5L304.6,50.6L311.4,51.7L318.4,52.9M287.6,44.4L293.6,45.3L299.7,46.3L306.1,47.4L312.6,48.4L319.4,49.5L326.3,50.6L333.5,51.8M301.3,43.4L307.5,44.4L313.8,45.3L320.3,46.3L327.0,47.4L333.8,48.4L340.9,49.5L348.3,50.6M321.1,43.4L327.5,44.4L334.1,45.3L341.0,46.3L348.0,47.4L355.2,48.4L362.7,49.5L370.4,50.7M334.4,42.5L341.0,43.4L347.7,44.4L354.7,45.3L361.8,46.4L369.2,47.4L376.8,48.5L384.6,49.6L392.7,50.7M354.1,42.5L361.0,43.4L368.1,44.4L375.3,45.3L382.8,46.4L390.5,47.4L398.5,48.5L406.7,49.6M367.0,41.6L374.0,42.5L381.2,43.4L388.6,44.4L396.2,45.4L404.0,46.4L412.1,47.4L420.4,48.5L429.0,49.6M386.7,41.6L394.0,42.5L401.5,43.4L409.2,44.4L417.2,45.4L425.4,46.4L433.8,47.4L442.5,48.5M399.2,40.7L406.6,41.6L414.2,42.5L422.0,43.4L430.1,44.4L438.3,45.4L446.9,46.4L455.7,47.4L464.8,48.5M418.9,40.7L426.6,41.6L434.5,42.5L442.7,43.4L451.0,44.4L459.7,45.4L468.6,46.4L477.8,47.4L487.2,48.5M438.8,40.7L446.8,41.5L455.0,42.5L463.5,43.4L472.2,44.4L481.2,45.4L490.5,46.4L500.0,47.5L509.9,48.6M450.7,39.8L458.8,40.6L467.1,41.5L475.6,42.4L484.5,43.4L493.5,44.4L502.9,45.4L512.5,46.4L522.4,47.5M470.5,39.8L478.9,40.6L487.6,41.5L496.4,42.4L505.6,43.4L515.0,44.4L524.7,45.4L534.7,46.4L545.1,47.5M490.5,39.7L499.2,40.6L508.2,41.5L517.4,42.4L526.9,43.4L536.7,44.4L546.7,45.4L557.1,46.4L567.9,47.5M501.9,38.9L510.6,39.7L519.7,40.6L529.0,41.5L538.5,42.4L548.4,43.4L558.5,44.4L569.0,45.4L579.7,46.4L590.9,47.5M521.8,38.8L530.9,39.7L540.3,40.6L549.9,41.5L559.8,42.4L570.0,43.4L580.5,44.4L591.3,45.4L602.5,46.4L614.0,47.5M541.9,38.8L551.3,39.7L561.0,40.6L571.0,41.5L581.2,42.4L591.8,43.4L602.7,44.4L613.9,45.4L625.5,46.4L637.4,47.5M562.2,38.8L571.9,39.7L581.9,40.6L592.2,41.5L602.9,42.4L613.8,43.4L625.0,44.4L636.7,45.4L648.6,46.5L661.0,47.5M582.6,38.8L592.7,39.6L603.0,40.5L613.7,41.5L624.6,42.4L635.9,43.4L647.6,44.4L659.6,45.4L672.0,46.5L684.8,47.6M603.2,38.8L613.6,39.6L624.3,40.5L635.3,41.4L646.6,42.4L658.3,43.4L670.3,44.4L682.7,45.4L695.5,46.5L708.8,47.6L722.4,48.7M623.9,38.7L634.6,39.6L645.7,40.5L657.0,41.4L668.7,42.4L680.8,43.4L693.2,44.4L706.1,45.4L719.3,46.5L732.9,47.6L747.1,48.7M644.8,38.7L655.8,39.6L667.2,40.5L678.9,41.4L691.0,42.4L703.5,43.4L716.3,44.4L729.6,45.4L743.2,46.5L757.3,47.6L771.9,48.8L787.0,49.9M665.8,38.7L677.2,39.6L688.9,40.5L701.0,41.4L713.5,42.4L726.4,43.3L739.6,44.4L753.3,45.4L767.4,46.5L781.9,47.6L797.0,48.8L812.6,50.0M687.0,38.7L698.7,39.6L710.8,40.5L723.3,41.4L736.2,42.4L749.4,43.3L763.1,44.4L777.2,45.4L791.7,46.5L806.8,47.6L822.3,48.8L838.4,50.0L855.0,51.2M720.4,39.5L732.9,40.4L745.8,41.4L759.0,42.3L772.7,43.3L786.8,44.4L801.3,45.4L816.3,46.5L831.8,47.6L847.8,48.8L864.4,50.0L881.5,51.3L899.3,52.6M742.3,39.5L755.2,40.4L768.4,41.4L782.0,42.3L796.1,43.3L810.6,44.4L825.6,45.4L841.1,46.5L857.1,47.7L873.6,48.8L890.7,50.0L908.3,51.3L926.6,52.6L945.6,53.9M764.3,39.5L777.6,40.4L791.2,41.4L805.3,42.3L819.8,43.3L834.7,44.4L850.1,45.4L866.1,46.5L882.5,47.7L899.5,48.8L917.2,50.1L935.4,51.3L954.2,52.6L973.8,54.0L994.1,55.4M800.2,40.4L814.2,41.3L828.7,42.3L843.6,43.3L859.0,44.4L874.9,45.4L891.3,46.5L908.2,47.7L925.8,48.9L943.9,50.1L962.7,51.4L982.1,52.7L1002.3,54.0M837.4,41.3L852.3,42.3L867.6,43.3L883.4,44.4L899.8,45.4L916.7,46.6L934.2,47.7L952.2,48.9L970.9,50.1L990.2,51.4M860.7,41.3L876.1,42.3L891.8,43.3L908.1,44.4L925.0,45.4L942.3,46.6L960.3,47.7L978.9,48.9L998.1,50.1M900.0,42.3L916.3,43.3L933.0,44.4L950.3,45.4L968.2,46.6L986.7,47.7M958.1,44.4L975.9,45.5L994.3,46.6" stroke="rgba(84,84,84,0.10)" stroke-width="0.9"/>
<path d="M-15.8,70.4L6.2,68.8L27.7,67.3L48.5,65.8L68.8,64.4L88.6,62.9M-13.7,72.2L8.7,70.5L30.5,69.0L51.7,67.4L72.3,65.9L92.4,64.4L112.0,63.0L131.0,61.6L149.6,60.3L167.8,59.0L185.4,57.7M-11.5,74.0L11.2,72.3L33.4,70.7L55.0,69.1L75.9,67.5L96.3,66.0L116.2,64.5L135.5,63.1L154.4,61.7L172.8,60.3L190.7,59.0L208.2,57.7L225.2,56.5L241.9,55.2M-9.3,75.9L13.9,74.2L36.4,72.5L58.4,70.8L79.7,69.2L100.4,67.6L120.6,66.1L140.2,64.6L159.3,63.2L178.0,61.8L196.1,60.4L213.9,59.1L231.1,57.8L248.0,56.5L264.4,55.3L280.4,54.1L296.1,52.9M-7.0,77.9L16.6,76.1L39.6,74.3L61.9,72.6L83.6,70.9L104.6,69.3L125.1,67.7L145.1,66.2L164.5,64.7L183.4,63.3L201.8,61.9L219.7,60.5L237.2,59.2L254.3,57.8L270.9,56.6L287.1,55.3L303.0,54.1L318.4,52.9L333.5,51.8M87.6,72.7L109.0,71.1L129.8,69.4L150.1,67.9L169.8,66.3L189.0,64.8L207.6,63.4L225.8,62.0L243.5,60.6L260.8,59.2L277.6,57.9L294.0,56.6L310.1,55.4L325.7,54.2L340.9,53.0L355.8,51.8L370.4,50.7M194.7,66.4L213.7,64.9L232.1,63.5L250.0,62.0L267.5,60.6L284.6,59.3L301.2,58.0L317.4,56.7L333.2,55.4L348.6,54.2L363.6,53.0L378.3,51.8L392.7,50.7L406.7,49.6M256.8,63.6L274.5,62.1L291.8,60.7L308.6,59.4L325.0,58.0L340.9,56.7L356.5,55.5L371.7,54.2L386.6,53.0L401.0,51.9L415.2,50.7L429.0,49.6M299.2,62.2L316.2,60.8L332.8,59.4L349.0,58.1L364.7,56.8L380.1,55.5L395.0,54.3L409.7,53.1L423.9,51.9L437.9,50.7L451.5,49.6L464.8,48.5M357.3,59.5L373.2,58.2L388.7,56.8L403.8,55.6L418.6,54.3L433.0,53.1L447.0,51.9L460.7,50.8L474.1,49.6L487.2,48.5M381.9,59.6L397.6,58.2L412.9,56.9L427.8,55.6L442.3,54.4L456.5,53.2L470.3,52.0L483.8,50.8L497.0,49.7L509.9,48.6L522.4,47.5M422.3,58.3L437.3,57.0L451.9,55.7L466.2,54.4L480.2,53.2L493.8,52.0L507.1,50.8L520.0,49.7L532.7,48.6L545.1,47.5M461.9,57.0L476.3,55.7L490.4,54.5L504.1,53.2L517.5,52.0L530.5,50.9L543.3,49.7L555.7,48.6L567.9,47.5M486.8,57.1L501.0,55.8L514.8,54.5L528.2,53.3L541.4,52.1L554.2,50.9L566.7,49.7L578.9,48.6L590.9,47.5M511.9,57.1L525.8,55.8L539.4,54.5L552.6,53.3L565.5,52.1L578.1,50.9L590.3,49.8L602.3,48.6L614.0,47.5M550.9,55.9L564.2,54.6L577.1,53.3L589.8,52.1L602.1,50.9L614.2,49.8L625.9,48.6L637.4,47.5M576.2,55.9L589.2,54.6L601.9,53.4L614.3,52.2L626.4,51.0L638.2,49.8L649.7,48.7L661.0,47.5M601.7,56.0L614.5,54.7L626.9,53.4L639.1,52.2L650.9,51.0L662.5,49.8L673.8,48.7L684.8,47.6M627.5,56.0L640.0,54.7L652.2,53.5L664.0,52.2L675.6,51.0L686.9,49.8L698.0,48.7M653.5,56.1L665.7,54.8L677.6,53.5L689.2,52.3L700.6,51.1L711.6,49.9L722.4,48.7M667.5,57.5L679.7,56.1L691.7,54.8L703.3,53.5L714.7,52.3L725.7,51.1L736.5,49.9L747.1,48.7M694.3,57.6L706.2,56.2L717.9,54.9L729.3,53.6L740.3,52.3L751.1,51.1L761.7,49.9L771.9,48.8M721.3,57.6L733.0,56.3L744.4,54.9L755.4,53.6L766.2,52.4L776.7,51.1L787.0,49.9M748.6,57.7L760.0,56.3L771.1,55.0L781.8,53.7L792.3,52.4L802.6,51.2L812.6,50.0M764.9,59.2L776.2,57.7L787.3,56.4L798.0,55.0L808.5,53.7L818.7,52.4L828.7,51.2L838.4,50.0M793.0,59.2L804.1,57.8L814.8,56.4L825.2,55.1L835.4,53.8L845.3,52.5L855.0,51.2M821.5,59.3L832.2,57.9L842.6,56.5L852.7,55.1L862.6,53.8L872.2,52.5L881.5,51.3M839.6,60.9L850.2,59.4L860.6,57.9L870.6,56.5L880.4,55.2L890.0,53.8L899.3,52.6M869.0,60.9L879.2,59.5L889.2,58.0L899.0,56.6L908.4,55.2L917.7,53.9L926.6,52.6M888.4,62.6L898.6,61.0L908.6,59.5L918.2,58.1L927.6,56.7L936.7,55.3L945.6,53.9M918.8,62.7L928.6,61.1L938.2,59.6L947.4,58.1L956.5,56.7L965.3,55.3M939.8,64.4L949.5,62.8L958.9,61.2L968.1,59.7L977.0,58.2L985.7,56.8M971.2,64.5L980.5,62.9L989.5,61.3M-7.0,77.9L-4.6,79.9M27.7,67.3L30.5,69.0L33.4,70.7L36.4,72.5L39.6,74.3L42.9,76.2M48.5,65.8L51.7,67.4L55.0,69.1L58.4,70.8L61.9,72.6L65.6,74.5M68.8,64.4L72.3,65.9L75.9,67.5L79.7,69.2L83.6,70.9L87.6,72.7M88.6,62.9L92.4,64.4L96.3,66.0L100.4,67.6L104.6,69.3L109.0,71.1M107.9,61.6L112.0,63.0L116.2,64.5L120.6,66.1L125.1,67.7L129.8,69.4M126.7,60.2L131.0,61.6L135.5,63.1L140.2,64.6L145.1,66.2L150.1,67.9L155.3,69.6M149.6,60.3L154.4,61.7L159.3,63.2L164.5,64.7L169.8,66.3L175.3,68.0M167.8,59.0L172.8,60.3L178.0,61.8L183.4,63.3L189.0,64.8L194.7,66.4M185.4,57.7L190.7,59.0L196.1,60.4L201.8,61.9L207.6,63.4L213.7,64.9M202.7,56.4L208.2,57.7L213.9,59.1L219.7,60.5L225.8,62.0L232.1,63.5L238.6,65.0M225.2,56.5L231.1,57.8L237.2,59.2L243.5,60.6L250.0,62.0L256.8,63.6M241.9,55.2L248.0,56.5L254.3,57.8L260.8,59.2L267.5,60.6L274.5,62.1M258.1,54.0L264.4,55.3L270.9,56.6L277.6,57.9L284.6,59.3L291.8,60.7L299.2,62.2M280.4,54.1L287.1,55.3L294.0,56.6L301.2,58.0L308.6,59.4L316.2,60.8M296.1,52.9L303.0,54.1L310.1,55.4L317.4,56.7L325.0,58.0L332.8,59.4L340.9,60.9M318.4,52.9L325.7,54.2L333.2,55.4L340.9,56.7L349.0,58.1L357.3,59.5M333.5,51.8L340.9,53.0L348.6,54.2L356.5,55.5L364.7,56.8L373.2,58.2L381.9,59.6M348.3,50.6L355.8,51.8L363.6,53.0L371.7,54.2L380.1,55.5L388.7,56.8L397.6,58.2M370.4,50.7L378.3,51.8L386.6,53.0L395.0,54.3L403.8,55.6L412.9,56.9L422.3,58.3M392.7,50.7L401.0,51.9L409.7,53.1L418.6,54.3L427.8,55.6L437.3,57.0L447.2,58.3M406.7,49.6L415.2,50.7L423.9,51.9L433.0,53.1L442.3,54.4L451.9,55.7L461.9,57.0M429.0,49.6L437.9,50.7L447.0,51.9L456.5,53.2L466.2,54.4L476.3,55.7L486.8,57.1M442.5,48.5L451.5,49.6L460.7,50.8L470.3,52.0L480.2,53.2L490.4,54.5L501.0,55.8L511.9,57.1M464.8,48.5L474.1,49.6L483.8,50.8L493.8,52.0L504.1,53.2L514.8,54.5L525.8,55.8L537.2,57.2M487.2,48.5L497.0,49.7L507.1,50.8L517.5,52.0L528.2,53.3L539.4,54.5L550.9,55.9M509.9,48.6L520.0,49.7L530.5,50.9L541.4,52.1L552.6,53.3L564.2,54.6L576.2,55.9M522.4,47.5L532.7,48.6L543.3,49.7L554.2,50.9L565.5,52.1L577.1,53.3L589.2,54.6L601.7,56.0M545.1,47.5L555.7,48.6L566.7,49.7L578.1,50.9L589.8,52.1L601.9,53.4L614.5,54.7L627.5,56.0M567.9,47.5L578.9,48.6L590.3,49.8L602.1,50.9L614.3,52.2L626.9,53.4L640.0,54.7L653.5,56.1M590.9,47.5L602.3,48.6L614.2,49.8L626.4,51.0L639.1,52.2L652.2,53.5L665.7,54.8L679.7,56.1L694.3,57.6M614.0,47.5L625.9,48.6L638.2,49.8L650.9,51.0L664.0,52.2L677.6,53.5L691.7,54.8L706.2,56.2L721.3,57.6M637.4,47.5L649.7,48.7L662.5,49.8L675.6,51.0L689.2,52.3L703.3,53.5L717.9,54.9L733.0,56.3L748.6,57.7M661.0,47.5L673.8,48.7L686.9,49.8L700.6,51.1L714.7,52.3L729.3,53.6L744.4,54.9L760.0,56.3L776.2,57.7L793.0,59.2M684.8,47.6L698.0,48.7L711.6,49.9L725.7,51.1L740.3,52.3L755.4,53.6L771.1,55.0L787.3,56.4L804.1,57.8L821.5,59.3L839.6,60.9M722.4,48.7L736.5,49.9L751.1,51.1L766.2,52.4L781.8,53.7L798.0,55.0L814.8,56.4L832.2,57.9L850.2,59.4L869.0,60.9M747.1,48.7L761.7,49.9L776.7,51.1L792.3,52.4L808.5,53.7L825.2,55.1L842.6,56.5L860.6,57.9L879.2,59.5L898.6,61.0L918.8,62.7L939.8,64.4M787.0,49.9L802.6,51.2L818.7,52.4L835.4,53.8L852.7,55.1L870.6,56.5L889.2,58.0L908.6,59.5L928.6,61.1L949.5,62.8L971.2,64.5L993.8,66.3M812.6,50.0L828.7,51.2L845.3,52.5L862.6,53.8L880.4,55.2L899.0,56.6L918.2,58.1L938.2,59.6L958.9,61.2L980.5,62.9L1002.9,64.6M855.0,51.2L872.2,52.5L890.0,53.8L908.4,55.2L927.6,56.7L947.4,58.1L968.1,59.7L989.5,61.3M899.3,52.6L917.7,53.9L936.7,55.3L956.5,56.7L977.0,58.2L998.3,59.8M945.6,53.9L965.3,55.3L985.7,56.8" stroke="rgba(84,84,84,0.15)" stroke-width="0.9"/>
<path d="M-29.4,81.9L-4.6,79.9L19.5,78.1L42.9,76.2L65.6,74.5L87.6,72.7M-27.4,84.1L-2.0,82.1L22.5,80.1L46.3,78.2L69.4,76.4L91.8,74.6L113.6,72.9L134.7,71.2L155.3,69.6L175.3,68.0L194.7,66.4M-25.2,86.4L0.6,84.3L25.6,82.3L49.8,80.3L73.4,78.4L96.2,76.6L118.3,74.8L139.8,73.0L160.7,71.3L181.0,69.7L200.7,68.1L219.9,66.5L238.6,65.0L256.8,63.6M-23.0,88.8L3.3,86.7L28.8,84.5L53.5,82.5L77.5,80.5L100.7,78.6L123.2,76.7L145.1,74.9L166.3,73.2L186.9,71.5L207.0,69.8L226.5,68.2L245.4,66.6L263.8,65.1L281.8,63.6L299.2,62.2M32.2,86.9L57.4,84.8L81.8,82.7L105.5,80.7L128.4,78.8L150.6,76.9L172.2,75.1L193.1,73.3L213.5,71.6L233.2,70.0L252.4,68.3L271.1,66.8L289.3,65.2L307.0,63.7L324.2,62.3L340.9,60.9L357.3,59.5M178.3,77.1L199.5,75.3L220.2,73.5L240.2,71.8L259.7,70.1L278.7,68.5L297.1,66.9L315.0,65.3L332.4,63.8L349.3,62.4L365.9,60.9L381.9,59.6M247.6,73.6L267.3,71.9L286.5,70.2L305.2,68.6L323.3,67.0L340.9,65.4L358.1,63.9L374.8,62.5L391.0,61.0L406.8,59.6L422.3,58.3M313.6,70.3L331.9,68.7L349.8,67.1L367.1,65.5L384.0,64.0L400.4,62.5L416.4,61.1L432.0,59.7L447.2,58.3L461.9,57.0M359.0,68.8L376.5,67.2L393.6,65.6L410.2,64.1L426.3,62.6L442.1,61.2L457.4,59.8L472.3,58.4L486.8,57.1M403.5,67.3L420.3,65.7L436.6,64.2L452.5,62.7L467.9,61.3L483.0,59.9L497.6,58.5L511.9,57.1M430.8,67.4L447.3,65.9L463.3,64.3L478.9,62.8L494.1,61.3L508.8,59.9L523.2,58.5L537.2,57.2L550.9,55.9M474.6,66.0L490.3,64.4L505.6,62.9L520.5,61.4L535.0,60.0L549.1,58.6L562.8,57.3L576.2,55.9M502.1,66.1L517.6,64.5L532.5,63.0L547.1,61.5L561.3,60.1L575.1,58.7L588.6,57.3L601.7,56.0M530.0,66.2L545.1,64.6L559.8,63.1L574.0,61.6L587.9,60.1L601.5,58.7L614.6,57.4L627.5,56.0M558.1,66.3L572.9,64.7L587.2,63.2L601.2,61.7L614.8,60.2L628.0,58.8L640.9,57.4L653.5,56.1M586.5,66.4L600.9,64.8L615.0,63.3L628.7,61.8L641.9,60.3L654.9,58.9L667.5,57.5M615.2,66.5L629.3,64.9L643.0,63.4L656.4,61.9L669.4,60.4L682.0,58.9L694.3,57.6M644.2,66.6L658.0,65.0L671.4,63.5L684.4,61.9L697.0,60.5L709.3,59.0L721.3,57.6M673.5,66.8L686.9,65.1L700.0,63.6L712.6,62.0L725.0,60.5L737.0,59.1L748.6,57.7M703.1,66.9L716.2,65.2L728.9,63.7L741.2,62.1L753.2,60.6L764.9,59.2M733.0,67.0L745.7,65.3L758.1,63.8L770.1,62.2L781.7,60.7L793.0,59.2M750.6,68.8L763.3,67.1L775.6,65.5L787.6,63.9L799.2,62.3L810.5,60.8L821.5,59.3M781.6,68.9L793.9,67.2L805.8,65.6L817.4,64.0L828.6,62.4L839.6,60.9M812.9,69.1L824.7,67.4L836.3,65.7L847.5,64.1L858.4,62.5L869.0,60.9M832.7,71.0L844.5,69.2L856.0,67.5L867.1,65.8L877.9,64.2L888.4,62.6M865.1,71.1L876.5,69.3L887.5,67.6L898.3,65.9L908.7,64.3L918.8,62.7M886.6,73.2L897.9,71.3L908.8,69.5L919.5,67.7L929.8,66.0L939.8,64.4M920.2,73.3L931.0,71.5L941.5,69.6L951.7,67.9L961.6,66.1L971.2,64.5M943.5,75.5L954.2,73.5L964.6,71.6L974.6,69.8L984.4,68.0M978.4,75.6L988.6,73.7M-4.6,79.9L-2.0,82.1L0.6,84.3L3.3,86.7L6.2,89.1M42.9,76.2L46.3,78.2L49.8,80.3L53.5,82.5L57.4,84.8M65.6,74.5L69.4,76.4L73.4,78.4L77.5,80.5L81.8,82.7M87.6,72.7L91.8,74.6L96.2,76.6L100.7,78.6L105.5,80.7M109.0,71.1L113.6,72.9L118.3,74.8L123.2,76.7L128.4,78.8L133.7,80.9M129.8,69.4L134.7,71.2L139.8,73.0L145.1,74.9L150.6,76.9L156.3,79.0M155.3,69.6L160.7,71.3L166.3,73.2L172.2,75.1L178.3,77.1M175.3,68.0L181.0,69.7L186.9,71.5L193.1,73.3L199.5,75.3M194.7,66.4L200.7,68.1L207.0,69.8L213.5,71.6L220.2,73.5L227.2,75.4M213.7,64.9L219.9,66.5L226.5,68.2L233.2,70.0L240.2,71.8L247.6,73.6M238.6,65.0L245.4,66.6L252.4,68.3L259.7,70.1L267.3,71.9M256.8,63.6L263.8,65.1L271.1,66.8L278.7,68.5L286.5,70.2L294.7,72.0M274.5,62.1L281.8,63.6L289.3,65.2L297.1,66.9L305.2,68.6L313.6,70.3M299.2,62.2L307.0,63.7L315.0,65.3L323.3,67.0L331.9,68.7L340.9,70.5M316.2,60.8L324.2,62.3L332.4,63.8L340.9,65.4L349.8,67.1L359.0,68.8M340.9,60.9L349.3,62.4L358.1,63.9L367.1,65.5L376.5,67.2L386.3,68.9M357.3,59.5L365.9,60.9L374.8,62.5L384.0,64.0L393.6,65.6L403.5,67.3M381.9,59.6L391.0,61.0L400.4,62.5L410.2,64.1L420.3,65.7L430.8,67.4M397.6,58.2L406.8,59.6L416.4,61.1L426.3,62.6L436.6,64.2L447.3,65.9L458.4,67.6M422.3,58.3L432.0,59.7L442.1,61.2L452.5,62.7L463.3,64.3L474.6,66.0M447.2,58.3L457.4,59.8L467.9,61.3L478.9,62.8L490.3,64.4L502.1,66.1M461.9,57.0L472.3,58.4L483.0,59.9L494.1,61.3L505.6,62.9L517.6,64.5L530.0,66.2M486.8,57.1L497.6,58.5L508.8,59.9L520.5,61.4L532.5,63.0L545.1,64.6L558.1,66.3M511.9,57.1L523.2,58.5L535.0,60.0L547.1,61.5L559.8,63.1L572.9,64.7L586.5,66.4M537.2,57.2L549.1,58.6L561.3,60.1L574.0,61.6L587.2,63.2L600.9,64.8L615.2,66.5M550.9,55.9L562.8,57.3L575.1,58.7L587.9,60.1L601.2,61.7L615.0,63.3L629.3,64.9L644.2,66.6M576.2,55.9L588.6,57.3L601.5,58.7L614.8,60.2L628.7,61.8L643.0,63.4L658.0,65.0L673.5,66.8M601.7,56.0L614.6,57.4L628.0,58.8L641.9,60.3L656.4,61.9L671.4,63.5L686.9,65.1L703.1,66.9M627.5,56.0L640.9,57.4L654.9,58.9L669.4,60.4L684.4,61.9L700.0,63.6L716.2,65.2L733.0,67.0M653.5,56.1L667.5,57.5L682.0,58.9L697.0,60.5L712.6,62.0L728.9,63.7L745.7,65.3L763.3,67.1L781.6,68.9M694.3,57.6L709.3,59.0L725.0,60.5L741.2,62.1L758.1,63.8L775.6,65.5L793.9,67.2L812.9,69.1M721.3,57.6L737.0,59.1L753.2,60.6L770.1,62.2L787.6,63.9L805.8,65.6L824.7,67.4L844.5,69.2L865.1,71.1M748.6,57.7L764.9,59.2L781.7,60.7L799.2,62.3L817.4,64.0L836.3,65.7L856.0,67.5L876.5,69.3L897.9,71.3L920.2,73.3M793.0,59.2L810.5,60.8L828.6,62.4L847.5,64.1L867.1,65.8L887.5,67.6L908.8,69.5L931.0,71.5L954.2,73.5L978.4,75.6L1003.8,77.9M839.6,60.9L858.4,62.5L877.9,64.2L898.3,65.9L919.5,67.7L941.5,69.6L964.6,71.6L988.6,73.7M869.0,60.9L888.4,62.6L908.7,64.3L929.8,66.0L951.7,67.9L974.6,69.8L998.5,71.8M939.8,64.4L961.6,66.1L984.4,68.0" stroke="rgba(84,84,84,0.20)" stroke-width="0.9"/>
<path d="M-20.7,91.4L6.2,89.1L32.2,86.9M-18.3,94.0L9.2,91.6L35.8,89.4L61.5,87.1L86.3,85.0L110.4,82.9L133.7,80.9L156.3,79.0L178.3,77.1M-15.7,96.8L12.3,94.3L39.5,91.9L65.7,89.6L91.0,87.4L115.6,85.2L139.3,83.2L162.3,81.1L184.6,79.2L206.2,77.3L227.2,75.4L247.6,73.6M-13.1,99.7L15.6,97.1L43.3,94.6L70.1,92.2L96.0,89.9L121.0,87.7L145.2,85.5L168.6,83.4L191.2,81.3L213.2,79.4L234.5,77.5L255.2,75.6L275.2,73.8L294.7,72.0L313.6,70.3M47.4,97.5L74.7,94.9L101.1,92.5L126.6,90.2L151.3,87.9L175.1,85.7L198.2,83.6L220.5,81.5L242.1,79.6L263.1,77.6L283.4,75.8L303.2,74.0L322.3,72.2L340.9,70.5L359.0,68.8M181.9,88.2L205.4,86.0L228.1,83.8L250.1,81.8L271.4,79.8L292.0,77.8L312.0,75.9L331.4,74.1L350.2,72.3L368.5,70.6L386.3,68.9L403.5,67.3M280.0,82.0L300.9,80.0L321.2,78.0L340.9,76.1L360.0,74.3L378.5,72.5L396.4,70.8L413.9,69.1L430.8,67.4M330.8,80.2L350.8,78.2L370.1,76.3L388.8,74.4L407.0,72.6L424.7,70.9L441.8,69.2L458.4,67.6L474.6,66.0M380.7,78.4L399.6,76.5L418.0,74.6L435.9,72.8L453.2,71.0L470.0,69.3L486.3,67.7L502.1,66.1M429.5,76.6L447.5,74.8L465.0,72.9L482.0,71.2L498.4,69.5L514.4,67.8L530.0,66.2M459.7,76.8L477.3,74.9L494.5,73.1L511.1,71.3L527.2,69.6L542.9,67.9L558.1,66.3M507.5,75.1L524.3,73.3L540.5,71.5L556.3,69.7L571.6,68.0L586.5,66.4M538.0,75.3L554.4,73.4L570.3,71.6L585.7,69.9L600.7,68.2L615.2,66.5M568.8,75.4L584.8,73.6L600.4,71.8L615.4,70.0L630.0,68.3L644.2,66.6M600.0,75.6L615.6,73.7L630.8,71.9L645.4,70.1L659.7,68.4L673.5,66.8M631.6,75.8L646.8,73.9L661.5,72.1L675.8,70.3L689.7,68.5L703.1,66.9M663.5,76.0L678.3,74.1L692.6,72.2L706.5,70.4L720.0,68.7L733.0,67.0M695.7,76.2L710.1,74.2L724.0,72.4L737.5,70.6L750.6,68.8M714.0,78.3L728.4,76.3L742.3,74.4L755.8,72.5L768.9,70.7L781.6,68.9M747.5,78.5L761.4,76.5L774.9,74.6L787.9,72.7L800.6,70.9L812.9,69.1M781.4,78.7L794.8,76.7L807.8,74.7L820.4,72.8L832.7,71.0M802.2,81.1L815.7,79.0L828.6,76.9L841.2,74.9L853.3,73.0L865.1,71.1M837.5,81.3L850.4,79.2L862.8,77.1L874.9,75.1L886.6,73.2M873.1,81.5L885.5,79.4L897.4,77.3L909.0,75.3L920.2,73.3M896.9,84.0L909.2,81.7L921.0,79.6L932.5,77.5L943.5,75.5M921.9,86.6L934.0,84.2L945.7,82.0L957.0,79.8L967.9,77.7L978.4,75.6M960.1,86.9L971.6,84.5L982.7,82.2L993.4,80.0M6.2,89.1L9.2,91.6L12.3,94.3L15.6,97.1L19.1,100.1M57.4,84.8L61.5,87.1L65.7,89.6L70.1,92.2L74.7,94.9M81.8,82.7L86.3,85.0L91.0,87.4L96.0,89.9L101.1,92.5M105.5,80.7L110.4,82.9L115.6,85.2L121.0,87.7L126.6,90.2M133.7,80.9L139.3,83.2L145.2,85.5L151.3,87.9L157.6,90.5M156.3,79.0L162.3,81.1L168.6,83.4L175.1,85.7L181.9,88.2M178.3,77.1L184.6,79.2L191.2,81.3L198.2,83.6L205.4,86.0M199.5,75.3L206.2,77.3L213.2,79.4L220.5,81.5L228.1,83.8M227.2,75.4L234.5,77.5L242.1,79.6L250.1,81.8L258.4,84.1M247.6,73.6L255.2,75.6L263.1,77.6L271.4,79.8L280.0,82.0M267.3,71.9L275.2,73.8L283.4,75.8L292.0,77.8L300.9,80.0L310.3,82.2M294.7,72.0L303.2,74.0L312.0,75.9L321.2,78.0L330.8,80.2M313.6,70.3L322.3,72.2L331.4,74.1L340.9,76.1L350.8,78.2L361.1,80.4M340.9,70.5L350.2,72.3L360.0,74.3L370.1,76.3L380.7,78.4M359.0,68.8L368.5,70.6L378.5,72.5L388.8,74.4L399.6,76.5L410.9,78.6M386.3,68.9L396.4,70.8L407.0,72.6L418.0,74.6L429.5,76.6M403.5,67.3L413.9,69.1L424.7,70.9L435.9,72.8L447.5,74.8L459.7,76.8M430.8,67.4L441.8,69.2L453.2,71.0L465.0,72.9L477.3,74.9L490.2,77.0M458.4,67.6L470.0,69.3L482.0,71.2L494.5,73.1L507.5,75.1M474.6,66.0L486.3,67.7L498.4,69.5L511.1,71.3L524.3,73.3L538.0,75.3M502.1,66.1L514.4,67.8L527.2,69.6L540.5,71.5L554.4,73.4L568.8,75.4M530.0,66.2L542.9,67.9L556.3,69.7L570.3,71.6L584.8,73.6L600.0,75.6M558.1,66.3L571.6,68.0L585.7,69.9L600.4,71.8L615.6,73.7L631.6,75.8M586.5,66.4L600.7,68.2L615.4,70.0L630.8,71.9L646.8,73.9L663.5,76.0M615.2,66.5L630.0,68.3L645.4,70.1L661.5,72.1L678.3,74.1L695.7,76.2M644.2,66.6L659.7,68.4L675.8,70.3L692.6,72.2L710.1,74.2L728.4,76.3L747.5,78.5M673.5,66.8L689.7,68.5L706.5,70.4L724.0,72.4L742.3,74.4L761.4,76.5L781.4,78.7M703.1,66.9L720.0,68.7L737.5,70.6L755.8,72.5L774.9,74.6L794.8,76.7L815.7,79.0L837.5,81.3M733.0,67.0L750.6,68.8L768.9,70.7L787.9,72.7L807.8,74.7L828.6,76.9L850.4,79.2L873.1,81.5L896.9,84.0M781.6,68.9L800.6,70.9L820.4,72.8L841.2,74.9L862.8,77.1L885.5,79.4L909.2,81.7L934.0,84.2L960.1,86.9M812.9,69.1L832.7,71.0L853.3,73.0L874.9,75.1L897.4,77.3L921.0,79.6L945.7,82.0L971.6,84.5L998.8,87.1M865.1,71.1L886.6,73.2L909.0,75.3L932.5,77.5L957.0,79.8L982.7,82.2L1009.7,84.8M920.2,73.3L943.5,75.5L967.9,77.7L993.4,80.0" stroke="rgba(84,84,84,0.25)" stroke-width="0.9"/>
<path d="M-10.3,102.8L19.1,100.1L47.4,97.5M-7.3,106.0L22.7,103.1L51.7,100.4L79.6,97.8L106.5,95.3L132.5,92.8L157.6,90.5L181.9,88.2M-36.3,112.4L-4.2,109.4L26.5,106.4L56.2,103.5L84.7,100.8L112.2,98.1L138.7,95.6L164.3,93.1L189.0,90.7L212.9,88.4L236.0,86.2L258.4,84.1L280.0,82.0M-33.8,116.2L-1.0,112.9L30.6,109.8L60.9,106.8L90.1,103.9L118.2,101.2L145.2,98.5L171.3,95.9L196.5,93.4L220.8,91.0L244.3,88.7L267.0,86.5L289.0,84.3L310.3,82.2L330.8,80.2M152.1,101.5L178.7,98.9L204.4,96.2L229.1,93.7L253.0,91.3L276.1,89.0L298.4,86.7L320.0,84.5L340.9,82.4L361.1,80.4L380.7,78.4M237.8,96.6L262.1,94.1L285.6,91.6L308.3,89.3L330.2,87.0L351.4,84.8L371.9,82.6L391.7,80.6L410.9,78.6L429.5,76.6M318.6,91.9L340.9,89.5L362.3,87.2L383.1,85.0L403.2,82.9L422.6,80.8L441.5,78.8L459.7,76.8M373.8,89.8L394.9,87.5L415.2,85.3L434.9,83.1L453.9,81.0L472.4,79.0L490.2,77.0L507.5,75.1M427.8,87.8L447.8,85.5L467.0,83.3L485.6,81.2L503.6,79.2L521.1,77.2L538.0,75.3M461.2,88.0L480.7,85.8L499.5,83.6L517.7,81.4L535.3,79.4L552.3,77.4L568.8,75.4M514.0,86.0L532.4,83.8L550.1,81.6L567.3,79.6L583.9,77.6L600.0,75.6M547.7,86.3L565.6,84.0L582.9,81.9L599.7,79.8L615.9,77.8L631.6,75.8M581.9,86.5L599.3,84.3L616.1,82.1L632.4,80.0L648.2,77.9L663.5,76.0M616.4,86.8L633.4,84.5L649.8,82.3L665.6,80.2L680.9,78.1L695.7,76.2M651.4,87.1L667.9,84.8L683.8,82.5L699.1,80.4L714.0,78.3M686.9,87.3L702.8,85.0L718.2,82.8L733.1,80.6L747.5,78.5M722.8,87.6L738.2,85.3L753.1,83.0L767.5,80.8L781.4,78.7M743.7,90.3L759.2,87.9L774.0,85.5L788.4,83.3L802.2,81.1M781.1,90.6L796.0,88.2L810.3,85.8L824.1,83.5L837.5,81.3M804.3,93.5L819.0,90.9L833.3,88.4L847.0,86.0L860.3,83.7L873.1,81.5M843.3,93.8L857.4,91.2L871.1,88.7L884.2,86.3L896.9,84.0M882.9,94.1L896.4,91.5L909.4,89.0L921.9,86.6M909.6,97.2L923.0,94.5L935.8,91.9L948.2,89.3L960.1,86.9M937.8,100.5L951.0,97.6L963.6,94.8L975.8,92.2L987.5,89.6M980.5,100.9L992.9,98.0M-7.3,106.0L-4.2,109.4L-1.0,112.9M19.1,100.1L22.7,103.1L26.5,106.4L30.6,109.8M74.7,94.9L79.6,97.8L84.7,100.8L90.1,103.9L95.7,107.3M101.1,92.5L106.5,95.3L112.2,98.1L118.2,101.2L124.4,104.4M126.6,90.2L132.5,92.8L138.7,95.6L145.2,98.5L152.1,101.5M157.6,90.5L164.3,93.1L171.3,95.9L178.7,98.9M181.9,88.2L189.0,90.7L196.5,93.4L204.4,96.2L212.6,99.2M205.4,86.0L212.9,88.4L220.8,91.0L229.1,93.7L237.8,96.6M228.1,83.8L236.0,86.2L244.3,88.7L253.0,91.3L262.1,94.1M258.4,84.1L267.0,86.5L276.1,89.0L285.6,91.6L295.6,94.4M280.0,82.0L289.0,84.3L298.4,86.7L308.3,89.3L318.6,91.9M310.3,82.2L320.0,84.5L330.2,87.0L340.9,89.5M330.8,80.2L340.9,82.4L351.4,84.8L362.3,87.2L373.8,89.8M361.1,80.4L371.9,82.6L383.1,85.0L394.9,87.5L407.2,90.1M380.7,78.4L391.7,80.6L403.2,82.9L415.2,85.3L427.8,87.8M410.9,78.6L422.6,80.8L434.9,83.1L447.8,85.5L461.2,88.0M429.5,76.6L441.5,78.8L453.9,81.0L467.0,83.3L480.7,85.8L495.0,88.3M459.7,76.8L472.4,79.0L485.6,81.2L499.5,83.6L514.0,86.0M490.2,77.0L503.6,79.2L517.7,81.4L532.4,83.8L547.7,86.3M507.5,75.1L521.1,77.2L535.3,79.4L550.1,81.6L565.6,84.0L581.9,86.5M538.0,75.3L552.3,77.4L567.3,79.6L582.9,81.9L599.3,84.3L616.4,86.8M568.8,75.4L583.9,77.6L599.7,79.8L616.1,82.1L633.4,84.5L651.4,87.1M600.0,75.6L615.9,77.8L632.4,80.0L649.8,82.3L667.9,84.8L686.9,87.3M631.6,75.8L648.2,77.9L665.6,80.2L683.8,82.5L702.8,85.0L722.8,87.6L743.7,90.3M663.5,76.0L680.9,78.1L699.1,80.4L718.2,82.8L738.2,85.3L759.2,87.9L781.1,90.6M695.7,76.2L714.0,78.3L733.1,80.6L753.1,83.0L774.0,85.5L796.0,88.2L819.0,90.9L843.3,93.8M747.5,78.5L767.5,80.8L788.4,83.3L810.3,85.8L833.3,88.4L857.4,91.2L882.9,94.1L909.6,97.2M781.4,78.7L802.2,81.1L824.1,83.5L847.0,86.0L871.1,88.7L896.4,91.5L923.0,94.5L951.0,97.6L980.5,100.9M837.5,81.3L860.3,83.7L884.2,86.3L909.4,89.0L935.8,91.9L963.6,94.8L992.9,98.0M896.9,84.0L921.9,86.6L948.2,89.3L975.8,92.2L1004.9,95.2M960.1,86.9L987.5,89.6" stroke="rgba(84,84,84,0.30)" stroke-width="0.9"/>
<path d="M-31.2,120.1L2.5,116.7L34.8,113.4L65.9,110.3L95.7,107.3L124.4,104.4L152.1,101.5M-28.5,124.3L6.1,120.7L39.3,117.2L71.1,113.9L101.7,110.8L131.0,107.7L159.2,104.8L186.4,101.9L212.6,99.2L237.8,96.6M-25.6,128.7L10.0,124.9L44.0,121.3L76.6,117.8L107.9,114.4L138.0,111.2L166.8,108.1L194.6,105.2L221.2,102.3L246.9,99.6L271.7,96.9L295.6,94.4L318.6,91.9M114.6,118.3L145.3,115.0L174.8,111.7L203.1,108.6L230.4,105.6L256.6,102.7L281.8,99.9L306.1,97.3L329.5,94.7L352.0,92.2L373.8,89.8M240.0,109.1L266.7,106.0L292.3,103.1L317.1,100.3L340.8,97.6L363.8,95.0L385.9,92.5L407.2,90.1L427.8,87.8M328.6,103.5L352.8,100.7L376.1,98.0L398.5,95.4L420.2,92.8L441.1,90.4L461.2,88.0M389.1,101.1L411.8,98.3L433.8,95.7L454.9,93.1L475.3,90.7L495.0,88.3L514.0,86.0M425.8,101.5L448.1,98.7L469.5,96.0L490.1,93.5L510.0,91.0L529.2,88.6L547.7,86.3M484.8,99.1L505.6,96.4L525.7,93.8L545.1,91.3L563.8,88.9L581.9,86.5M522.0,99.4L542.3,96.7L561.8,94.1L580.7,91.6L598.9,89.1L616.4,86.8M559.7,99.8L579.4,97.1L598.4,94.4L616.7,91.9L634.4,89.4L651.4,87.1M597.9,100.2L617.1,97.4L635.5,94.8L653.3,92.2L670.4,89.7L686.9,87.3M636.7,100.6L655.2,97.8L673.1,95.1L690.3,92.5L706.8,90.0L722.8,87.6M676.0,101.0L693.9,98.2L711.2,95.4L727.8,92.8L743.7,90.3M715.9,101.4L733.2,98.5L749.8,95.8L765.8,93.2L781.1,90.6M756.4,101.8L773.0,98.9L788.9,96.1L804.3,93.5M780.9,105.2L797.4,102.2L813.3,99.3L828.6,96.5L843.3,93.8M823.2,105.7L839.0,102.6L854.2,99.7L868.8,96.9L882.9,94.1M850.5,109.4L866.2,106.1L881.3,103.1L895.7,100.1L909.6,97.2M895.0,109.9L909.9,106.6L924.1,103.5L937.8,100.5M925.5,113.8L940.1,110.4L954.2,107.1L967.6,103.9L980.5,100.9M972.2,114.4L986.0,110.9M-1.0,112.9L2.5,116.7L6.1,120.7L10.0,124.9L14.1,129.4M30.6,109.8L34.8,113.4L39.3,117.2L44.0,121.3L49.0,125.6M95.7,107.3L101.7,110.8L107.9,114.4L114.6,118.3M124.4,104.4L131.0,107.7L138.0,111.2L145.3,115.0M152.1,101.5L159.2,104.8L166.8,108.1L174.8,111.7M178.7,98.9L186.4,101.9L194.6,105.2L203.1,108.6L212.2,112.2M212.6,99.2L221.2,102.3L230.4,105.6L240.0,109.1M237.8,96.6L246.9,99.6L256.6,102.7L266.7,106.0M262.1,94.1L271.7,96.9L281.8,99.9L292.3,103.1L303.5,106.5M295.6,94.4L306.1,97.3L317.1,100.3L328.6,103.5M318.6,91.9L329.5,94.7L340.8,97.6L352.8,100.7L365.4,103.9M340.9,89.5L352.0,92.2L363.8,95.0L376.1,98.0L389.1,101.1M373.8,89.8L385.9,92.5L398.5,95.4L411.8,98.3L425.8,101.5M407.2,90.1L420.2,92.8L433.8,95.7L448.1,98.7M427.8,87.8L441.1,90.4L454.9,93.1L469.5,96.0L484.8,99.1M461.2,88.0L475.3,90.7L490.1,93.5L505.6,96.4L522.0,99.4M495.0,88.3L510.0,91.0L525.7,93.8L542.3,96.7L559.7,99.8M514.0,86.0L529.2,88.6L545.1,91.3L561.8,94.1L579.4,97.1L597.9,100.2M547.7,86.3L563.8,88.9L580.7,91.6L598.4,94.4L617.1,97.4L636.7,100.6M581.9,86.5L598.9,89.1L616.7,91.9L635.5,94.8L655.2,97.8L676.0,101.0M616.4,86.8L634.4,89.4L653.3,92.2L673.1,95.1L693.9,98.2L715.9,101.4M651.4,87.1L670.4,89.7L690.3,92.5L711.2,95.4L733.2,98.5L756.4,101.8L780.9,105.2M686.9,87.3L706.8,90.0L727.8,92.8L749.8,95.8L773.0,98.9L797.4,102.2L823.2,105.7M743.7,90.3L765.8,93.2L788.9,96.1L813.3,99.3L839.0,102.6L866.2,106.1L895.0,109.9M781.1,90.6L804.3,93.5L828.6,96.5L854.2,99.7L881.3,103.1L909.9,106.6L940.1,110.4L972.2,114.4L1006.3,118.6M843.3,93.8L868.8,96.9L895.7,100.1L924.1,103.5L954.2,107.1L986.0,110.9M909.6,97.2L937.8,100.5L967.6,103.9L999.2,107.6M980.5,100.9L1011.8,104.4" stroke="rgba(84,84,84,0.35)" stroke-width="0.9"/>
<path d="M-22.5,133.4L14.1,129.4L49.0,125.6L82.5,121.9L114.6,118.3M-19.2,138.4L18.4,134.2L54.4,130.1L88.7,126.2L121.6,122.5L153.1,118.9L183.2,115.5L212.2,112.2L240.0,109.1M-15.7,143.8L23.1,139.2L60.1,134.9L95.3,130.8L129.1,126.9L161.3,123.1L192.2,119.5L221.7,116.0L250.1,112.7L277.3,109.5L303.5,106.5L328.6,103.5M137.0,131.5L170.0,127.5L201.6,123.7L231.9,120.1L260.8,116.6L288.6,113.2L315.2,110.0L340.8,106.9L365.4,103.9L389.1,101.1M272.2,120.6L300.5,117.1L327.7,113.7L353.7,110.5L378.7,107.4L402.7,104.4L425.8,101.5M340.8,117.7L367.3,114.2L392.7,111.0L417.1,107.8L440.6,104.8L463.1,101.9L484.8,99.1M407.6,114.8L432.3,111.5L456.1,108.3L478.9,105.2L500.9,102.3L522.0,99.4M448.4,115.3L472.5,112.0L495.7,108.7L517.9,105.6L539.2,102.7L559.7,99.8M513.3,112.5L535.8,109.2L557.3,106.1L578.0,103.1L597.9,100.2M554.8,113.0L576.5,109.7L597.4,106.5L617.4,103.5L636.7,100.6M596.8,113.5L617.9,110.2L638.0,107.0L657.4,103.9L676.0,101.0M639.5,114.0L659.8,110.7L679.3,107.5L698.0,104.4L715.9,101.4M682.9,114.6L702.4,111.2L721.1,107.9L739.1,104.8L756.4,101.8M726.9,115.1L745.7,111.7L763.6,108.4L780.9,105.2M752.9,119.3L771.6,115.7L789.6,112.2L806.8,108.9L823.2,105.7M799.2,119.9L817.1,116.2L834.2,112.7L850.5,109.4M846.3,120.5L863.3,116.8L879.5,113.3L895.0,109.9M877.4,125.1L894.2,121.2L910.2,117.4L925.5,113.8M910.5,130.0L927.1,125.8L942.8,121.8L957.9,118.0L972.2,114.4M962.1,130.7L977.6,126.5L992.3,122.4M14.1,129.4L18.4,134.2L23.1,139.2L28.0,144.7M49.0,125.6L54.4,130.1L60.1,134.9L66.1,140.1M114.6,118.3L121.6,122.5L129.1,126.9L137.0,131.5M145.3,115.0L153.1,118.9L161.3,123.1L170.0,127.5M174.8,111.7L183.2,115.5L192.2,119.5L201.6,123.7L211.7,128.2M212.2,112.2L221.7,116.0L231.9,120.1L242.6,124.3M240.0,109.1L250.1,112.7L260.8,116.6L272.2,120.6M266.7,106.0L277.3,109.5L288.6,113.2L300.5,117.1L313.1,121.2M303.5,106.5L315.2,110.0L327.7,113.7L340.8,117.7M328.6,103.5L340.8,106.9L353.7,110.5L367.3,114.2L381.7,118.2M365.4,103.9L378.7,107.4L392.7,111.0L407.6,114.8M389.1,101.1L402.7,104.4L417.1,107.8L432.3,111.5L448.4,115.3M425.8,101.5L440.6,104.8L456.1,108.3L472.5,112.0M448.1,98.7L463.1,101.9L478.9,105.2L495.7,108.7L513.3,112.5M484.8,99.1L500.9,102.3L517.9,105.6L535.8,109.2L554.8,113.0M522.0,99.4L539.2,102.7L557.3,106.1L576.5,109.7L596.8,113.5M559.7,99.8L578.0,103.1L597.4,106.5L617.9,110.2L639.5,114.0M597.9,100.2L617.4,103.5L638.0,107.0L659.8,110.7L682.9,114.6M636.7,100.6L657.4,103.9L679.3,107.5L702.4,111.2L726.9,115.1L752.9,119.3M676.0,101.0L698.0,104.4L721.1,107.9L745.7,111.7L771.6,115.7L799.2,119.9M715.9,101.4L739.1,104.8L763.6,108.4L789.6,112.2L817.1,116.2L846.3,120.5L877.4,125.1M780.9,105.2L806.8,108.9L834.2,112.7L863.3,116.8L894.2,121.2L927.1,125.8L962.1,130.7M823.2,105.7L850.5,109.4L879.5,113.3L910.2,117.4L942.8,121.8L977.6,126.5L1014.7,131.5M895.0,109.9L925.5,113.8L957.9,118.0L992.3,122.4" stroke="rgba(84,84,84,0.40)" stroke-width="0.9"/>
<path d="M-12.0,149.5L28.0,144.7L66.1,140.1L102.4,135.7L137.0,131.5M-8.0,155.6L33.3,150.5L72.6,145.6L109.9,140.9L145.4,136.5L179.3,132.2L211.7,128.2L242.6,124.3L272.2,120.6M-48.7,168.0L-3.7,162.2L39.0,156.7L79.5,151.4L117.9,146.5L154.4,141.7L189.2,137.3L222.4,133.0L254.0,128.9L284.2,125.0L313.1,121.2L340.8,117.7M164.0,147.4L199.8,142.6L233.8,138.1L266.1,133.7L297.0,129.6L326.5,125.6L354.7,121.8L381.7,118.2L407.6,114.8M279.1,138.9L310.7,134.5L340.8,130.3L369.5,126.3L397.0,122.5L423.3,118.8L448.4,115.3M385.3,131.0L413.2,127.0L439.9,123.1L465.5,119.4L489.9,115.9L513.3,112.5M430.5,131.7L457.6,127.6L483.6,123.7L508.3,120.0L532.0,116.4L554.8,113.0M502.8,128.3L527.9,124.4L551.9,120.6L574.8,117.0L596.8,113.5M548.7,129.0L573.0,125.0L596.2,121.2L618.3,117.5L639.5,114.0M595.4,129.8L618.8,125.7L641.1,121.8L662.5,118.1L682.9,114.6M642.9,130.5L665.4,126.4L686.8,122.5L707.3,118.7L726.9,115.1M691.2,131.2L712.8,127.1L733.3,123.1L752.9,119.3M740.4,132.0L760.9,127.8L780.5,123.8L799.2,119.9M769.9,137.3L790.4,132.8L810.0,128.5L828.6,124.4L846.3,120.5M822.0,138.1L841.4,133.5L859.8,129.2L877.4,125.1M855.7,143.8L874.9,139.0L893.2,134.3L910.5,130.0M910.9,144.8L928.9,139.8L945.9,135.2L962.1,130.7M949.6,151.0L967.2,145.7L983.9,140.7L999.7,136.0M-8.0,155.6L-3.7,162.2M28.0,144.7L33.3,150.5L39.0,156.7M66.1,140.1L72.6,145.6L79.5,151.4L86.9,157.7M137.0,131.5L145.4,136.5L154.4,141.7L164.0,147.4M170.0,127.5L179.3,132.2L189.2,137.3L199.8,142.6M211.7,128.2L222.4,133.0L233.8,138.1L245.9,143.5M242.6,124.3L254.0,128.9L266.1,133.7L279.1,138.9M272.2,120.6L284.2,125.0L297.0,129.6L310.7,134.5M313.1,121.2L326.5,125.6L340.8,130.3L356.0,135.3M340.8,117.7L354.7,121.8L369.5,126.3L385.3,131.0M381.7,118.2L397.0,122.5L413.2,127.0L430.5,131.7M407.6,114.8L423.3,118.8L439.9,123.1L457.6,127.6M448.4,115.3L465.5,119.4L483.6,123.7L502.8,128.3M472.5,112.0L489.9,115.9L508.3,120.0L527.9,124.4L548.7,129.0M513.3,112.5L532.0,116.4L551.9,120.6L573.0,125.0L595.4,129.8M554.8,113.0L574.8,117.0L596.2,121.2L618.8,125.7L642.9,130.5M596.8,113.5L618.3,117.5L641.1,121.8L665.4,126.4L691.2,131.2M639.5,114.0L662.5,118.1L686.8,122.5L712.8,127.1L740.4,132.0L769.9,137.3M682.9,114.6L707.3,118.7L733.3,123.1L760.9,127.8L790.4,132.8L822.0,138.1M752.9,119.3L780.5,123.8L810.0,128.5L841.4,133.5L874.9,139.0L910.9,144.8M799.2,119.9L828.6,124.4L859.8,129.2L893.2,134.3L928.9,139.8L967.2,145.7L1008.4,152.0M877.4,125.1L910.5,130.0L945.9,135.2L983.9,140.7L1024.6,146.7M962.1,130.7L999.7,136.0" stroke="rgba(84,84,84,0.45)" stroke-width="0.9"/>
<path d="M-45.7,175.5L1.0,169.3L45.1,163.3L86.9,157.7L126.5,152.4L164.0,147.4M-42.5,183.6L6.0,176.9L51.7,170.5L94.8,164.5L135.7,158.8L174.4,153.5L211.1,148.3L245.9,143.5L279.1,138.9M-39.0,192.5L11.4,185.2L58.8,178.3L103.4,171.8L145.6,165.7L185.4,160.0L223.2,154.5L258.9,149.3L292.9,144.4L325.2,139.7L356.0,135.3L385.3,131.0M236.2,161.1L272.9,155.6L307.7,150.3L340.7,145.3L372.1,140.6L402.0,136.0L430.5,131.7M357.4,151.3L389.5,146.2L419.9,141.4L448.9,136.8L476.5,132.5L502.8,128.3M408.1,152.3L439.1,147.2L468.6,142.3L496.6,137.7L523.3,133.3L548.7,129.0M489.7,148.1L518.1,143.2L545.2,138.5L570.9,134.0L595.4,129.8M541.2,149.1L568.6,144.1L594.6,139.3L619.4,134.8L642.9,130.5M593.7,150.1L620.0,145.0L644.9,140.2L668.7,135.6L691.2,131.2M647.2,151.1L672.3,146.0L696.2,141.1L718.8,136.4L740.4,132.0M701.8,152.2L725.7,146.9L748.4,142.0L769.9,137.3M757.4,153.2L780.1,147.9L801.6,142.9L822.0,138.1M791.6,160.0L814.1,154.3L835.5,148.9L855.7,143.8M850.9,161.2L872.0,155.4L892.0,149.9L910.9,144.8M890.6,168.7L911.4,162.4L931.1,156.6L949.6,151.0M954.1,170.0L973.3,163.7L991.3,157.7M-3.7,162.2L1.0,169.3L6.0,176.9L11.4,185.2M39.0,156.7L45.1,163.3L51.7,170.5L58.8,178.3M86.9,157.7L94.8,164.5L103.4,171.8M164.0,147.4L174.4,153.5L185.4,160.0L197.3,167.0M199.8,142.6L211.1,148.3L223.2,154.5L236.2,161.1M245.9,143.5L258.9,149.3L272.9,155.6M279.1,138.9L292.9,144.4L307.7,150.3L323.6,156.6M310.7,134.5L325.2,139.7L340.7,145.3L357.4,151.3M356.0,135.3L372.1,140.6L389.5,146.2L408.1,152.3M385.3,131.0L402.0,136.0L419.9,141.4L439.1,147.2M430.5,131.7L448.9,136.8L468.6,142.3L489.7,148.1M457.6,127.6L476.5,132.5L496.6,137.7L518.1,143.2L541.2,149.1M502.8,128.3L523.3,133.3L545.2,138.5L568.6,144.1L593.7,150.1M548.7,129.0L570.9,134.0L594.6,139.3L620.0,145.0L647.2,151.1M595.4,129.8L619.4,134.8L644.9,140.2L672.3,146.0L701.8,152.2M642.9,130.5L668.7,135.6L696.2,141.1L725.7,146.9L757.4,153.2L791.6,160.0M691.2,131.2L718.8,136.4L748.4,142.0L780.1,147.9L814.1,154.3L850.9,161.2M769.9,137.3L801.6,142.9L835.5,148.9L872.0,155.4L911.4,162.4L954.1,170.0L1000.4,178.3M822.0,138.1L855.7,143.8L892.0,149.9L931.1,156.6L973.3,163.7L1019.0,171.4M910.9,144.8L949.6,151.0L991.3,157.7" stroke="rgba(84,84,84,0.50)" stroke-width="0.9"/>
<path d="M-35.2,202.1L17.3,194.2L66.5,186.7L112.7,179.7L156.3,173.2L197.3,167.0L236.2,161.1M-31.0,212.6L23.7,204.0L74.9,195.9L122.8,188.3L167.8,181.2L210.2,174.5L250.2,168.2L287.9,162.3L323.6,156.6L357.4,151.3M133.8,197.7L180.4,190.0L224.2,182.7L265.3,175.9L304.1,169.5L340.7,163.5L375.3,157.7L408.1,152.3M321.6,177.3L359.2,170.8L394.6,164.7L428.0,158.9L459.7,153.4L489.7,148.1M415.4,172.2L449.6,165.9L481.8,160.0L512.3,154.4L541.2,149.1M472.8,173.5L505.7,167.2L536.7,161.2L566.0,155.5L593.7,150.1M563.0,168.5L592.6,162.4L620.7,156.6L647.2,151.1M621.5,169.8L649.8,163.6L676.5,157.7L701.8,152.2M652.7,177.8L681.3,171.1L708.1,164.8L733.5,158.9L757.4,153.2M715.4,179.3L742.3,172.5L767.7,166.1L791.6,160.0M779.5,180.8L804.7,173.9L828.5,167.4L850.9,161.2M819.9,189.9L845.0,182.4L868.5,175.3L890.6,168.7M888.9,191.6L912.0,184.0L933.7,176.8L954.1,170.0M11.4,185.2L17.3,194.2L23.7,204.0L30.7,214.7M937.0,201.8L959.6,193.4L980.7,185.6L1000.4,178.3M58.8,178.3L66.5,186.7L74.9,195.9L84.0,205.9M103.4,171.8L112.7,179.7L122.8,188.3L133.8,197.7M197.3,167.0L210.2,174.5L224.2,182.7M236.2,161.1L250.2,168.2L265.3,175.9L281.8,184.3M272.9,155.6L287.9,162.3L304.1,169.5L321.6,177.3M323.6,156.6L340.7,163.5L359.2,170.8L379.2,178.8M357.4,151.3L375.3,157.7L394.6,164.7L415.4,172.2M408.1,152.3L428.0,158.9L449.6,165.9L472.8,173.5M439.1,147.2L459.7,153.4L481.8,160.0L505.7,167.2L531.5,174.9M489.7,148.1L512.3,154.4L536.7,161.2L563.0,168.5M541.2,149.1L566.0,155.5L592.6,162.4L621.5,169.8M593.7,150.1L620.7,156.6L649.8,163.6L681.3,171.1L715.4,179.3M647.2,151.1L676.5,157.7L708.1,164.8L742.3,172.5L779.5,180.8M701.8,152.2L733.5,158.9L767.7,166.1L804.7,173.9L845.0,182.4L888.9,191.6M791.6,160.0L828.5,167.4L868.5,175.3L912.0,184.0L959.6,193.4L1011.7,203.8M850.9,161.2L890.6,168.7L933.7,176.8L980.7,185.6L1032.0,195.2" stroke="rgba(84,84,84,0.55)" stroke-width="0.9"/>
<path d="M-26.4,224.2L30.7,214.7L84.0,205.9L133.8,197.7M-21.3,236.9L38.5,226.5L94.0,216.9L145.8,207.9L194.1,199.5L239.4,191.6L281.8,184.3L321.6,177.3M-15.7,251.1L47.0,239.6L105.1,229.0L159.0,219.1L209.1,209.9L255.9,201.4L299.7,193.3L340.7,185.8L379.2,178.8L415.4,172.2M274.0,212.0L319.2,203.3L361.4,195.1L400.9,187.4L438.0,180.3L472.8,173.5M384.0,205.2L424.6,196.9L462.5,189.1L498.1,181.8L531.5,174.9L563.0,168.5M489.3,198.7L525.5,190.8L559.5,183.3L591.5,176.3L621.5,169.8M555.6,200.6L590.1,192.5L622.4,184.9L652.7,177.8M623.5,202.5L656.2,194.3L686.7,186.5L715.4,179.3M693.1,204.5L723.8,196.1L752.5,188.2L779.5,180.8M764.5,206.5L793.1,197.9L819.9,189.9M809.2,218.0L837.7,208.6L864.2,199.8L888.9,191.6M30.7,214.7L38.5,226.5L47.0,239.6M886.8,220.4L912.8,210.7L937.0,201.8M84.0,205.9L94.0,216.9L105.1,229.0M941.1,233.4L966.4,222.8L989.9,212.9M133.8,197.7L145.8,207.9L159.0,219.1M224.2,182.7L239.4,191.6L255.9,201.4L274.0,212.0M281.8,184.3L299.7,193.3L319.2,203.3M321.6,177.3L340.7,185.8L361.4,195.1L384.0,205.2M379.2,178.8L400.9,187.4L424.6,196.9M415.4,172.2L438.0,180.3L462.5,189.1L489.3,198.7M472.8,173.5L498.1,181.8L525.5,190.8L555.6,200.6M531.5,174.9L559.5,183.3L590.1,192.5L623.5,202.5M563.0,168.5L591.5,176.3L622.4,184.9L656.2,194.3L693.1,204.5M621.5,169.8L652.7,177.8L686.7,186.5L723.8,196.1L764.5,206.5L809.2,218.0M715.4,179.3L752.5,188.2L793.1,197.9L837.7,208.6L886.8,220.4L941.1,233.4M779.5,180.8L819.9,189.9L864.2,199.8L912.8,210.7L966.4,222.8L1025.9,236.1M888.9,191.6L937.0,201.8L989.9,212.9" stroke="rgba(84,84,84,0.60)" stroke-width="0.9"/>
<path d="M-9.4,266.9L56.5,254.1L117.3,242.3L173.5,231.5L225.6,221.4L274.0,212.0M189.6,245.2L243.8,234.0L294.0,223.7L340.6,214.1L384.0,205.2M364.2,226.1L408.9,216.3L450.5,207.2L489.3,198.7M479.0,218.6L518.6,209.3L555.6,200.6M550.9,220.9L588.5,211.4L623.5,202.5M624.7,223.2L660.2,213.5L693.1,204.5M700.6,225.7L733.7,215.8L764.5,206.5M-9.4,266.9L-2.3,284.6M745.5,239.1L778.6,228.2L809.2,218.0M47.0,239.6L56.5,254.1L67.2,270.3M828.4,242.0L858.7,230.8L886.8,220.4M105.1,229.0L117.3,242.3L130.9,257.2M913.8,244.9L941.1,233.4M159.0,219.1L173.5,231.5L189.6,245.2M274.0,212.0L294.0,223.7L316.0,236.7M319.2,203.3L340.6,214.1L364.2,226.1M384.0,205.2L408.9,216.3L436.3,228.6M424.6,196.9L450.5,207.2L479.0,218.6M489.3,198.7L518.6,209.3L550.9,220.9M555.6,200.6L588.5,211.4L624.7,223.2M623.5,202.5L660.2,213.5L700.6,225.7M693.1,204.5L733.7,215.8L778.6,228.2L828.4,242.0M809.2,218.0L858.7,230.8L913.8,244.9L975.3,260.7M941.1,233.4L1001.7,247.9" stroke="rgba(84,84,84,0.65)" stroke-width="0.9"/>
<path d="M-78.4,300.2L-2.3,284.6L67.2,270.3L130.9,257.2L189.6,245.2M207.5,260.4L264.0,248.1L316.0,236.7L364.2,226.1M390.3,239.4L436.3,228.6L479.0,218.6M466.7,242.2L510.4,231.1L550.9,220.9M586.6,233.7L624.7,223.2M664.9,236.4L700.6,225.7M-2.3,284.6L5.6,304.6M709.6,251.0L745.5,239.1M67.2,270.3L79.1,288.5M795.5,254.2L828.4,242.0M130.9,257.2L146.1,273.9M851.6,271.0L884.0,257.4L913.8,244.9M189.6,245.2L207.5,260.4M316.0,236.7L340.5,251.1M364.2,226.1L390.3,239.4M436.3,228.6L466.7,242.2M479.0,218.6L510.4,231.1M550.9,220.9L586.6,233.7M624.7,223.2L664.9,236.4L709.6,251.0M700.6,225.7L745.5,239.1L795.5,254.2M828.4,242.0L884.0,257.4L946.5,274.7M975.3,260.7L1044.6,278.5" stroke="rgba(84,84,84,0.65)" stroke-width="1.2"/>
<path d="M-75.3,322.4L5.6,304.6L79.1,288.5L146.1,273.9L207.5,260.4M-71.7,347.8L14.7,327.5L92.7,309.2L163.3,292.6L227.6,277.5L286.5,263.7L340.5,251.1L390.3,239.4M108.1,332.8L182.8,313.9L250.3,296.9L311.8,281.3L367.9,267.1L419.4,254.1L466.7,242.2M398.7,285.2L451.9,270.7L500.6,257.3L545.3,245.0L586.6,233.7M488.6,289.3L538.6,274.3L584.3,260.6L626.3,248.0L664.9,236.4M5.6,304.6L14.7,327.5L25.2,353.8M581.5,293.5L628.1,278.0L670.6,263.9L709.6,251.0M79.1,288.5L92.7,309.2L108.1,332.8M677.6,297.8L720.6,281.9L759.7,267.4L795.5,254.2M146.1,273.9L163.3,292.6L182.8,313.9M777.2,302.3L816.1,285.9L851.6,271.0M207.5,260.4L227.6,277.5L250.3,296.9M953.9,331.0L987.2,311.7M340.5,251.1L367.9,267.1L398.7,285.2M390.3,239.4L419.4,254.1L451.9,270.7L488.6,289.3M466.7,242.2L500.6,257.3L538.6,274.3L581.5,293.5M510.4,231.1L545.3,245.0L584.3,260.6L628.1,278.0L677.6,297.8M586.6,233.7L626.3,248.0L670.6,263.9L720.6,281.9L777.2,302.3M709.6,251.0L759.7,267.4L816.1,285.9L880.3,306.9L953.9,331.0L1039.1,358.9M795.5,254.2L851.6,271.0L915.0,290.0L987.2,311.7M946.5,274.7L1017.3,294.3" stroke="rgba(84,84,84,0.70)" stroke-width="1.2"/>
<path d="M-67.5,377.2L25.2,353.8L108.1,332.8M-62.6,411.7L37.3,384.3L126.0,360.0L205.1,338.3L276.2,318.8L340.4,301.2L398.7,285.2M-56.7,452.8L51.7,420.3L146.8,391.8L230.9,366.6L305.9,344.1L373.1,323.9L433.7,305.8L488.6,289.3M25.2,353.8L37.3,384.3L51.7,420.3M410.6,350.1L473.6,329.2L530.2,310.4L581.5,293.5M108.1,332.8L126.0,360.0L146.8,391.8M519.7,356.3L578.0,334.7L630.4,315.3L677.6,297.8M182.8,313.9L205.1,338.3L230.9,366.6M633.2,362.7L686.5,340.4L734.2,320.3L777.2,302.3M250.3,296.9L276.2,318.8L305.9,344.1L340.3,373.4M875.1,376.5L916.8,352.5L953.9,331.0M398.7,285.2L433.7,305.8L473.6,329.2L519.7,356.3M964.5,412.2L1004.1,383.9M488.6,289.3L530.2,310.4L578.0,334.7L633.2,362.7M581.5,293.5L630.4,315.3L686.5,340.4L751.6,369.5M677.6,297.8L734.2,320.3L799.3,346.3L875.1,376.5L964.5,412.2L1071.5,454.8M777.2,302.3L842.0,325.6L916.8,352.5L1004.1,383.9" stroke="rgba(84,84,84,0.75)" stroke-width="1.2"/>
<path d="M340.3,373.4L410.6,350.1M230.9,366.6L261.1,399.6M828.2,403.7L875.1,376.5M751.6,369.5L828.2,403.7" stroke="rgba(84,84,84,0.75)" stroke-width="1.5"/>
<path d="M51.7,420.3L68.8,463.3L89.5,515.5L115.3,580.3M-49.6,502.5L68.8,463.3L171.3,429.3L261.1,399.6L340.3,373.4M146.8,391.8L171.3,429.3L200.8,474.3L236.8,529.3M-40.9,563.8L89.5,515.5L200.8,474.3L296.9,438.8L380.7,407.7L454.3,380.5L519.7,356.3M261.1,399.6L296.9,438.8L340.0,485.9L428.7,448.7L505.8,416.3L573.5,387.9L633.2,362.7M340.3,373.4L380.7,407.7L428.7,448.7L487.0,498.2M642.3,511.2L713.4,470.1L774.7,434.6L828.2,403.7M519.7,356.3L573.5,387.9L637.0,425.2L713.4,470.1L806.7,524.9L867.3,481.6L919.3,444.4L964.5,412.2M633.2,362.7L697.9,395.6L774.7,434.6L867.3,481.6L981.2,539.4L1124.6,612.3M923.5,593.5L981.2,539.4L1029.8,493.8M828.2,403.7L919.3,444.4L1029.8,493.8" stroke="rgba(84,84,84,0.80)" stroke-width="1.5"/>
<path d="M-15.5,742.5L4.1,880.1M115.3,580.3L148.2,662.9L191.5,771.8L251.2,921.7M236.8,529.3L281.8,597.9L339.6,686.1L416.5,803.6M340.0,485.9L393.0,543.9L459.6,616.8L545.9,711.2L662.2,838.4M-29.9,641.3L115.3,580.3L236.8,529.3L340.0,485.9M487.0,498.2L558.9,559.4L649.9,636.9L769.0,738.2L931.4,876.4M4.1,880.1L191.5,771.8L339.6,686.1L459.6,616.8L558.9,559.4L642.3,511.2M806.7,524.9L923.5,593.5L1073.8,681.7M416.5,803.6L545.9,711.2L649.9,636.9L735.3,575.9L806.7,524.9M662.2,838.4L769.0,738.2L854.1,658.5L923.5,593.5M931.4,876.4L1011.0,767.6" stroke="rgba(84,84,84,0.85)" stroke-width="1.5"/>
<path d="M416.5,803.6L524.1,967.8M251.2,921.7L416.5,803.6" stroke="rgba(84,84,84,0.90)" stroke-width="1.5"/></g>
<g fill="none" stroke-linecap="round"><path d="M-5.4,60.7L-4.1,61.6" stroke="rgba(165,58,80,0.55)" stroke-width="1.15"/><path d="M-4.1,61.6L-2.7,62.6" stroke="rgba(165,58,80,0.55)" stroke-width="1.15"/><path d="M-2.7,62.6L-1.3,63.6" stroke="rgba(165,58,80,0.55)" stroke-width="1.15"/><path d="M-1.3,63.6L0.1,64.6" stroke="rgba(165,58,80,0.55)" stroke-width="1.15"/><path d="M0.1,64.6L1.6,65.6" stroke="rgba(165,58,80,0.55)" stroke-width="1.15"/><path d="M1.6,65.6L3.1,66.7" stroke="rgba(165,58,80,0.55)" stroke-width="1.15"/><path d="M3.1,66.7L4.7,67.7" stroke="rgba(165,58,80,0.55)" stroke-width="1.15"/><path d="M4.7,67.7L6.2,68.8" stroke="rgba(165,58,80,0.56)" stroke-width="1.15"/><path d="M6.2,68.8L7.9,70.0" stroke="rgba(165,58,80,0.56)" stroke-width="1.15"/><path d="M7.9,70.0L9.5,71.1" stroke="rgba(165,58,80,0.57)" stroke-width="1.15"/><path d="M9.5,71.1L11.2,72.3" stroke="rgba(165,58,80,0.58)" stroke-width="1.15"/><path d="M11.2,72.3L13.0,73.5" stroke="rgba(165,58,80,0.58)" stroke-width="1.15"/><path d="M13.0,73.5L14.8,74.8" stroke="rgba(165,58,80,0.59)" stroke-width="1.15"/><path d="M14.8,74.8L16.6,76.1" stroke="rgba(165,58,80,0.59)" stroke-width="1.15"/><path d="M16.6,76.1L18.5,77.4" stroke="rgba(165,58,80,0.6)" stroke-width="1.15"/><path d="M18.5,77.4L20.5,78.7" stroke="rgba(165,58,80,0.61)" stroke-width="1.15"/><path d="M20.5,78.7L22.5,80.1" stroke="rgba(165,58,80,0.61)" stroke-width="1.15"/><path d="M22.5,80.1L24.5,81.6" stroke="rgba(165,58,80,0.62)" stroke-width="1.15"/><path d="M24.5,81.6L26.7,83.0" stroke="rgba(165,58,80,0.62)" stroke-width="1.15"/><path d="M26.7,83.0L28.8,84.5" stroke="rgba(165,58,80,0.63)" stroke-width="1.15"/><path d="M28.8,84.5L31.1,86.1" stroke="rgba(165,58,80,0.64)" stroke-width="1.15"/><path d="M31.1,86.1L33.4,87.7" stroke="rgba(165,58,80,0.64)" stroke-width="1.15"/><path d="M33.4,87.7L35.8,89.4" stroke="rgba(165,58,80,0.65)" stroke-width="1.15"/><path d="M35.8,89.4L38.2,91.1" stroke="rgba(165,58,80,0.65)" stroke-width="1.15"/><path d="M38.2,91.1L40.7,92.8" stroke="rgba(165,58,80,0.66)" stroke-width="1.15"/><path d="M40.7,92.8L43.3,94.6" stroke="rgba(165,58,80,0.67)" stroke-width="1.15"/><path d="M43.3,94.6L46.0,96.5" stroke="rgba(165,58,80,0.67)" stroke-width="1.15"/><path d="M46.0,96.5L48.8,98.4" stroke="rgba(165,58,80,0.68)" stroke-width="1.15"/><path d="M48.8,98.4L51.7,100.4" stroke="rgba(165,58,80,0.68)" stroke-width="1.15"/><path d="M51.7,100.4L54.6,102.5" stroke="rgba(165,58,80,0.69)" stroke-width="1.15"/><path d="M54.6,102.5L57.7,104.6" stroke="rgba(165,58,80,0.7)" stroke-width="1.15"/><path d="M57.7,104.6L60.9,106.8" stroke="rgba(165,58,80,0.7)" stroke-width="1.15"/><path d="M60.9,106.8L64.2,109.1" stroke="rgba(165,58,80,0.71)" stroke-width="1.15"/><path d="M64.2,109.1L67.6,111.5" stroke="rgba(165,58,80,0.71)" stroke-width="1.15"/><path d="M67.6,111.5L71.1,113.9" stroke="rgba(165,58,80,0.72)" stroke-width="1.15"/><path d="M71.1,113.9L74.8,116.5" stroke="rgba(165,58,80,0.73)" stroke-width="1.15"/><path d="M74.8,116.5L78.6,119.1" stroke="rgba(165,58,80,0.73)" stroke-width="1.15"/><path d="M78.6,119.1L82.5,121.9" stroke="rgba(165,58,80,0.74)" stroke-width="1.15"/><path d="M82.5,121.9L86.6,124.7" stroke="rgba(165,58,80,0.74)" stroke-width="1.15"/><path d="M86.6,124.7L90.9,127.7" stroke="rgba(165,58,80,0.75)" stroke-width="1.15"/><path d="M90.9,127.7L95.3,130.8" stroke="rgba(165,58,80,0.75)" stroke-width="1.15"/><path d="M95.3,130.8L100.0,134.0" stroke="rgba(165,58,80,0.76)" stroke-width="1.15"/><path d="M100.0,134.0L104.8,137.4" stroke="rgba(165,58,80,0.77)" stroke-width="1.15"/><path d="M104.8,137.4L109.9,140.9" stroke="rgba(165,58,80,0.77)" stroke-width="1.4"/><path d="M109.9,140.9L115.2,144.6" stroke="rgba(165,58,80,0.78)" stroke-width="1.4"/><path d="M115.2,144.6L120.7,148.4" stroke="rgba(165,58,80,0.78)" stroke-width="1.4"/><path d="M120.7,148.4L126.5,152.4" stroke="rgba(165,58,80,0.79)" stroke-width="1.4"/><path d="M126.5,152.4L132.5,156.7" stroke="rgba(165,58,80,0.8)" stroke-width="1.4"/><path d="M132.5,156.7L138.9,161.1" stroke="rgba(165,58,80,0.8)" stroke-width="1.4"/><path d="M138.9,161.1L145.6,165.7" stroke="rgba(165,58,80,0.81)" stroke-width="1.4"/><path d="M145.6,165.7L152.6,170.6" stroke="rgba(165,58,80,0.81)" stroke-width="1.4"/><path d="M152.6,170.6L160.0,175.8" stroke="rgba(165,58,80,0.82)" stroke-width="1.4"/><path d="M160.0,175.8L167.8,181.2" stroke="rgba(165,58,80,0.83)" stroke-width="1.4"/><path d="M167.8,181.2L176.1,187.0" stroke="rgba(165,58,80,0.83)" stroke-width="1.4"/><path d="M176.1,187.0L184.9,193.0" stroke="rgba(165,58,80,0.84)" stroke-width="1.4"/><path d="M184.9,193.0L194.1,199.5" stroke="rgba(165,58,80,0.84)" stroke-width="1.4"/><path d="M194.1,199.5L204.0,206.3" stroke="rgba(165,58,80,0.85)" stroke-width="1.4"/><path d="M204.0,206.3L214.4,213.6" stroke="rgba(165,58,80,0.85)" stroke-width="1.4"/><path d="M214.4,213.6L225.6,221.4" stroke="rgba(165,58,80,0.86)" stroke-width="1.4"/><path d="M225.6,221.4L237.5,229.7" stroke="rgba(165,58,80,0.87)" stroke-width="1.4"/><path d="M237.5,229.7L250.3,238.5" stroke="rgba(165,58,80,0.87)" stroke-width="1.4"/><path d="M250.3,238.5L264.0,248.1" stroke="rgba(165,58,80,0.88)" stroke-width="1.4"/><path d="M264.0,248.1L278.7,258.3" stroke="rgba(165,58,80,0.88)" stroke-width="1.4"/><path d="M278.7,258.3L294.6,269.4" stroke="rgba(165,58,80,0.89)" stroke-width="1.4"/><path d="M294.6,269.4L311.8,281.3" stroke="rgba(165,58,80,0.89)" stroke-width="1.7"/><path d="M311.8,281.3L330.5,294.3" stroke="rgba(165,58,80,0.9)" stroke-width="1.7"/><path d="M330.5,294.3L350.8,308.5" stroke="rgba(165,58,80,0.9)" stroke-width="1.7"/><path d="M350.8,308.5L373.1,323.9" stroke="rgba(165,58,80,0.91)" stroke-width="1.7"/><path d="M373.1,323.9L397.5,340.9" stroke="rgba(165,58,80,0.91)" stroke-width="1.7"/><path d="M397.5,340.9L424.4,359.7" stroke="rgba(165,58,80,0.92)" stroke-width="1.7"/><path d="M424.4,359.7L454.3,380.5" stroke="rgba(165,58,80,0.92)" stroke-width="1.7"/><path d="M454.3,380.5L487.7,403.6" stroke="rgba(165,58,80,0.93)" stroke-width="1.7"/><path d="M487.7,403.6L525.1,429.7" stroke="rgba(165,58,80,0.93)" stroke-width="1.7"/><path d="M525.1,429.7L567.4,459.1" stroke="rgba(165,58,80,0.94)" stroke-width="1.7"/><path d="M567.4,459.1L615.6,492.6" stroke="rgba(165,58,80,0.94)" stroke-width="1.7"/><path d="M615.6,492.6L671.0,531.1" stroke="rgba(165,58,80,0.94)" stroke-width="1.7"/><path d="M671.0,531.1L735.3,575.9" stroke="rgba(165,58,80,0.94)" stroke-width="1.7"/><path d="M735.3,575.9L811.1,628.5" stroke="rgba(165,58,80,0.95)" stroke-width="1.7"/><path d="M811.1,628.5L901.4,691.3" stroke="rgba(165,58,80,0.95)" stroke-width="1.7"/><path d="M901.4,691.3L1011.0,767.6" stroke="rgba(165,58,80,0.95)" stroke-width="1.7"/></g><g fill="none" stroke-linecap="round"><path d="M-78.5,773.2L43.0,714.1" stroke="rgba(110,158,44,0.95)" stroke-width="1.7"/><path d="M43.0,714.1L148.2,662.9" stroke="rgba(110,158,44,0.95)" stroke-width="1.7"/><path d="M148.2,662.9L240.1,618.2" stroke="rgba(110,158,44,0.95)" stroke-width="1.7"/><path d="M240.1,618.2L321.1,578.9" stroke="rgba(110,158,44,0.95)" stroke-width="1.7"/><path d="M321.1,578.9L393.0,543.9" stroke="rgba(110,158,44,0.95)" stroke-width="1.7"/><path d="M393.0,543.9L457.3,512.6" stroke="rgba(110,158,44,0.94)" stroke-width="1.7"/><path d="M457.3,512.6L515.1,484.5" stroke="rgba(110,158,44,0.94)" stroke-width="1.7"/><path d="M515.1,484.5L567.4,459.1" stroke="rgba(110,158,44,0.94)" stroke-width="1.7"/><path d="M567.4,459.1L614.9,436.0" stroke="rgba(110,158,44,0.94)" stroke-width="1.7"/><path d="M614.9,436.0L658.2,414.9" stroke="rgba(110,158,44,0.93)" stroke-width="1.7"/><path d="M658.2,414.9L697.9,395.6" stroke="rgba(110,158,44,0.93)" stroke-width="1.7"/><path d="M697.9,395.6L734.4,377.8" stroke="rgba(110,158,44,0.92)" stroke-width="1.7"/><path d="M734.4,377.8L768.1,361.5" stroke="rgba(110,158,44,0.92)" stroke-width="1.7"/><path d="M768.1,361.5L799.3,346.3" stroke="rgba(110,158,44,0.91)" stroke-width="1.7"/><path d="M799.3,346.3L828.3,332.2" stroke="rgba(110,158,44,0.91)" stroke-width="1.7"/><path d="M828.3,332.2L855.2,319.1" stroke="rgba(110,158,44,0.9)" stroke-width="1.7"/><path d="M855.2,319.1L880.3,306.9" stroke="rgba(110,158,44,0.9)" stroke-width="1.7"/><path d="M880.3,306.9L903.8,295.5" stroke="rgba(110,158,44,0.89)" stroke-width="1.7"/><path d="M903.8,295.5L925.9,284.8" stroke="rgba(110,158,44,0.89)" stroke-width="1.4"/><path d="M925.9,284.8L946.5,274.7" stroke="rgba(110,158,44,0.88)" stroke-width="1.4"/><path d="M946.5,274.7L966.0,265.3" stroke="rgba(110,158,44,0.88)" stroke-width="1.4"/><path d="M966.0,265.3L984.4,256.3" stroke="rgba(110,158,44,0.87)" stroke-width="1.4"/></g></g>
<defs><linearGradient id="lg" x1="0" y1="0" x2="0.4" y2="1"><stop offset="0" stop-color="#8e8f8f"/><stop offset="1" stop-color="#868787"/></linearGradient><clipPath id="low"><polygon points="428.7,448.7 558.9,559.4 554.1,639.4 434.2,522.6"/><polygon points="558.9,559.4 713.4,470.1 697.6,545.9 554.1,639.4"/></clipPath></defs>
<polygon points="422.4,362.3 564.7,462.3 732.0,380.6 578.5,308.5" fill="#9b9c9d"/>
<polygon points="422.4,362.3 564.7,462.3 554.1,639.4 434.2,522.6" fill="url(#lg)"/>
<polygon points="564.7,462.3 732.0,380.6 697.6,545.9 554.1,639.4" fill="#575757"/>
<g clip-path="url(#low)" opacity="0.45"><use href="#gax"/></g>
<path d="M564.7,462.3L554.1,639.4M422.4,362.3L564.7,462.3M564.7,462.3L732.0,380.6" stroke="#1a1a1a" stroke-width="0.9" fill="none"/>
<path d="M732.0,380.6L578.5,308.5M578.5,308.5L422.4,362.3M422.4,362.3L434.2,522.6M732.0,380.6L697.6,545.9M434.2,522.6L554.1,639.4M554.1,639.4L697.6,545.9" stroke="#0d0d0d" stroke-width="1.1" fill="none" stroke-linejoin="round"/>
<circle cx="567.4" cy="459.1" r="2.4" fill="#e3915c" stroke="#3a3a3a" stroke-width="0.6"/>
</svg>
</div>
<!-- viewport header -->
<div class="a" style="left:0;top:44px;width:13px;height:27px;background:#282828;border-radius:0 5px 5px 0"></div>
<div class="a" style="left:37px;top:44px;width:114px;height:27px;background:#282828;border-radius:5px"></div>
<div class="a" style="left:160px;top:44px;width:44px;height:27px;background:#282828;border-radius:5px"></div>
<div class="a" style="left:213px;top:44px;width:73px;height:27px;background:#282828;border-radius:5px;overflow:hidden"><div class="a" style="left:0;top:0;width:28px;height:27px;background:#545454"></div></div>
<div class="a" style="left:295px;top:44px;width:73px;height:27px;background:#353535;border-radius:5px;overflow:hidden"><div class="a" style="left:0;top:0;width:27px;height:27px;background:#4a4a4a"></div></div>
<div class="a" style="left:392px;top:44px;width:44px;height:27px;background:#282828;border-radius:5px"></div>
<div class="a" style="left:445px;top:44px;width:56px;height:27px;background:#282828;border-radius:5px;overflow:hidden"><div class="a" style="left:0;top:0;width:27px;height:27px;background:#4772b3"></div></div>
<div class="a" style="left:510px;top:44px;width:56px;height:27px;background:#282828;border-radius:5px;overflow:hidden"><div class="a" style="left:0;top:0;width:27px;height:27px;background:#4772b3"></div></div>
<div class="a" style="left:575px;top:44px;width:27px;height:27px;background:#4f4f4f;border-radius:5px"></div>
<div class="a" style="left:611px;top:44px;width:140px;height:27px;background:#282828;border-radius:5px;overflow:hidden">
 <div class="a" style="left:0;top:0;width:28px;height:27px;background:#4f4f4f"></div>
 <div class="a" style="left:28px;top:0;width:28px;height:27px;background:#4772b3"></div>
 <div class="a" style="left:56px;top:0;width:28px;height:27px;background:#4f4f4f;border-left:1px solid #454545"></div>
 <div class="a" style="left:84px;top:0;width:28px;height:27px;background:#4f4f4f;border-left:1px solid #454545"></div>
</div>
<div class="a" style="left:774px;top:44px;width:180px;height:27px;background:#282828;border-radius:5px;overflow:hidden"><div class="a" style="left:0;top:0;width:27px;height:27px;background:#4f4f4f;border-radius:5px"></div></div>
<div class="t" style="left:75px;top:48px;color:#e6e6e6">Global</div>
<svg class="a" style="left:0;top:39px" width="979" height="40" viewBox="0 39 979 40">
<g fill="none" stroke="#e0e0e0" stroke-width="1.4" stroke-linecap="round" stroke-linejoin="round">
 <path d="M0 56.5l4.5 4.5 4.5-4.5"/>
 <path d="M47.7 61V47.8M43.8 51.6l3.9-3.9 3.9 3.9M50 63.5H64.4M60.5 59.6l3.9 3.9-3.9 3.9"/>
 <path d="M138 56.5l4.5 4.5 4.5-4.5"/>
 <path d="M179.68 61.86A6.4 6.4 0 1 1 172.94 53.82"/><path d="M175.02 52.14A6.4 6.4 0 1 1 181.76 60.18"/>
 <path d="M191 56.5l4.5 4.5 4.5-4.5"/>
 <path d="M245.3 61H263M245.3 56v10.5M263 56v10.5M249.8 59.5v3.5M254 59.5v3.5M258.2 59.5v3.5"/>
 <path d="M273 56.5l4.5 4.5 4.5-4.5"/>
 <path d="M423 56.5l4.5 4.5 4.5-4.5"/>
 <path d="M483 56.5l4.5 4.5 4.5-4.5"/>
 <path d="M548 56.5l4.5 4.5 4.5-4.5"/>
 <path d="M732 56.5l4.5 4.5 4.5-4.5" stroke="#fff"/>
</g>
<g fill="none" stroke="#999" stroke-width="1.3" stroke-linecap="round"><path d="M49.5 61.5L60 51M55.6 51H60V55.4"/></g>
<circle cx="47.7" cy="63.4" r="2.2" fill="#282828" stroke="#e0e0e0" stroke-width="1.4"/>
<circle cx="177.5" cy="56.8" r="2.3" fill="#e8e8e8"/>
<!-- magnet -->
<g transform="translate(226.8,56) rotate(-135) scale(1.08)" fill="none" stroke="#a8a8a8" stroke-width="1.3" stroke-linejoin="round">
 <path d="M-8 -8 V1 A8 8 0 0 0 8 1 V-8 H3.5 V1 A3.5 3.5 0 0 1 -3.5 1 V-8 Z"/>
</g>
<rect x="260" y="47.5" width="5.6" height="5.5" fill="#e0e0e0"/>
<!-- proportional -->
<circle cx="308.6" cy="57.3" r="7.6" fill="none" stroke="#8a8a8a" stroke-width="1"/>
<circle cx="308.6" cy="57.3" r="2.8" fill="#b8c4be"/>
<path d="M329 67C334 67 336 48 340 48S346 67 351 67" fill="none" stroke="#9a9a9a" stroke-width="1.3"/>
<path d="M355 56.5l4.5 4.5 4.5-4.5" fill="none" stroke="#555" stroke-width="1.3"/>
<!-- visibility -->
<path d="M399.5 52.5C402 48.5 405 47 408 47S414 48.5 416.5 52.5C414 56.5 411 58 408 58S402 56.5 399.5 52.5Z" fill="#dcdcdc"/>
<circle cx="408" cy="52.5" r="3" fill="#282828"/><circle cx="408" cy="52.5" r="1.6" fill="#dcdcdc"/>
<path d="M395.5 56.5L407 62.5L402 63.5L400.5 68Z" fill="#dcdcdc"/>
<!-- gizmo -->
<g fill="none" stroke="#fff" stroke-width="1.4" stroke-linecap="round">
 <path d="M448 50.5C457 51 465 58 465.5 68"/><path d="M453.5 62.5L468 49M462 49.3H468V55.3"/>
</g>
<circle cx="451" cy="65" r="2.4" fill="#4772b3" stroke="#fff" stroke-width="1.4"/>
<!-- overlays -->
<circle cx="527.3" cy="52.8" r="7.2" fill="#fff"/>
<g stroke="#4772b3" stroke-width="1.1"><path d="M521.5 53.5l2.5 2.5M522.5 51l4.5 4.5M524 56.5l2 2M527.5 56l2 2"/></g>
<path d="M526.6 60.9A6.5 6.5 0 1 1 521.3 55.6" fill="none" stroke="#fff" stroke-width="1.4"/>
<!-- xray -->
<g fill="none" stroke="#dcdcdc" stroke-width="1.4"><path d="M578.5 53h15v14.5h-15z"/><path d="M584 53v-5.5h14.5v13.5h-5"/></g>
<g fill="#dcdcdc"><rect x="582" y="56" width="1.5" height="3"/><rect x="582" y="60.5" width="1.5" height="1.5"/><rect x="584.5" y="62" width="3" height="1.5"/></g>
<!-- shading -->
<g fill="none" stroke="#d8d8d8" stroke-width="1.3"><circle cx="624.5" cy="57" r="9.8"/><path d="M614.7 54H634.3M614.7 60.5H634.3M622 47.5C619.5 52 619.5 62 622 66.5"/></g>
<circle cx="652.5" cy="57" r="10.2" fill="#fff"/>
<circle cx="680.5" cy="57" r="9.8" fill="none" stroke="#d8d8d8" stroke-width="1.3"/>
<path d="M680.5 47.2A9.8 9.8 0 0 0 673.5 64L680.5 57Z" fill="#c8c8c8"/><path d="M680.5 47.2V57L673.5 64" stroke="#d8d8d8" stroke-width="1.3" fill="none"/>
<g stroke="#d8d8d8" stroke-width="1"><path d="M681 65.5l1.5-1.5M684 64.5l1.5-1.5M686.5 62.5l1.5-1.5M688 60l1.5-1.5"/></g>
<circle cx="708.5" cy="57" r="9.8" fill="none" stroke="#d8d8d8" stroke-width="1.3"/>
<path d="M702.5 54A7 7 0 0 1 706.5 50" stroke="#d8d8d8" stroke-width="2" fill="none" stroke-linecap="round"/>
<g stroke="#d8d8d8" stroke-width="1"><path d="M707 65.5l1.5-1.5M710 64.5l1.5-1.5M712.5 62.5l1.5-1.5M714.5 60l1.5-1.5M715.5 57l1.5-1.5"/></g>
<!-- object type visibility -->
<path d="M788 52.5L793 57.5L788 62.5L783 57.5Z" fill="none" stroke="#e0e0e0" stroke-width="1.3"/>
<rect x="817" y="50" width="15" height="15" rx="1.5" fill="#e0e0e0"/>
<path d="M820 57.5l3 3 6-6" fill="none" stroke="#282828" stroke-width="2.2"/>
<path d="M842.5 57C845 52.5 848.5 50.5 852.5 50.5S860 52.5 862.5 57C860 61.5 856.5 63.5 852.5 63.5S845 61.5 842.5 57Z" fill="#e0e0e0"/>
<circle cx="852.5" cy="57" r="3.2" fill="#282828"/><circle cx="852.5" cy="57" r="1.6" fill="#e0e0e0"/>
<path d="M874 50.5L890.5 56.5L883 58.5L881 66Z" fill="#e0e0e0"/>
<rect x="901.5" y="50" width="17" height="12" fill="none" stroke="#e0e0e0" stroke-width="1.4"/><rect x="904" y="52.5" width="12" height="7" fill="#e0e0e0"/>
<path d="M910 62v3M905 65.5h10" stroke="#e0e0e0" stroke-width="1.4"/>
<path d="M930.5 52h4l2-3h8l2 3h4v13.5h-20Z" fill="#e0e0e0"/>
<circle cx="940.5" cy="58.5" r="5" fill="#282828"/><circle cx="940.5" cy="58.5" r="3.6" fill="#e0e0e0"/><circle cx="940.5" cy="58.5" r="2.2" fill="#282828"/>
</svg>
<!-- toolbar -->
<div class="a" style="left:9px;top:127px;width:61px;height:97px;background:#282828;border-radius:5px;overflow:hidden"><div class="a" style="left:0;top:0;width:61px;height:48px;background:#4772b3"></div></div>
<div class="a" style="left:9px;top:234px;width:61px;height:97px;background:#282828;border-radius:5px;overflow:hidden"><div class="a" style="left:0;top:48px;width:61px;height:1px;background:#3a3a3a"></div></div>
<div class="a" style="left:9px;top:341px;width:61px;height:197px;background:#282828;border-radius:5px;overflow:hidden">
 <div class="a" style="left:0;top:48px;width:61px;height:1px;background:#3a3a3a"></div>
 <div class="a" style="left:0;top:98px;width:61px;height:1px;background:#3a3a3a"></div>
 <div class="a" style="left:0;top:148px;width:61px;height:1px;background:#3a3a3a"></div>
</div>
<div class="a" style="left:9px;top:548px;width:61px;height:97px;background:#282828;border-radius:5px;overflow:hidden"><div class="a" style="left:0;top:48px;width:61px;height:1px;background:#3a3a3a"></div></div>
<div class="a" style="left:9px;top:655px;width:61px;height:48px;background:#282828;border-radius:5px"></div>
<div class="a" style="left:9px;top:712px;width:61px;height:147px;background:#282828;border-radius:5px;overflow:hidden">
 <div class="a" style="left:0;top:48px;width:61px;height:1px;background:#3a3a3a"></div>
 <div class="a" style="left:0;top:98px;width:61px;height:1px;background:#3a3a3a"></div>
</div>
<svg class="a" style="left:0;top:120px" width="80" height="745" viewBox="0 120 80 745">
<g fill="#a0a0a0"><path d="M66 166.5V171.5H61Z"/><path d="M66 273V278H61Z"/><path d="M66 322V327H61Z"/><path d="M66 480V485H61Z"/><path d="M66 587V592H61Z"/><path d="M66 694V699H61Z"/></g>
<!-- select box -->
<path d="M25.8 136.6V154L30 150L38.3 149Z" fill="#e0e0e0"/>
<g stroke="#e0e0e0" stroke-width="1.3"><path d="M44.6 147.5V161.3M37.7 154.4H51.5"/></g>
<g fill="#e0e0e0"><path d="M41.8 149.5L44.6 145.3L47.4 149.5Z"/><path d="M41.8 159.3L44.6 163.5L47.4 159.3Z"/><path d="M39.7 151.6L35.5 154.4L39.7 157.2Z"/><path d="M49.5 151.6L53.7 154.4L49.5 157.2Z"/></g>
<!-- cursor -->
<circle cx="38.1" cy="199.6" r="15.8" fill="none" stroke="#f2f2f2" stroke-width="2.2"/>
<circle cx="38.1" cy="199.6" r="15.8" fill="none" stroke="#a3263a" stroke-width="2.2" stroke-dasharray="12.41 12.41" stroke-dashoffset="0"/>
<g stroke="#999" stroke-width="1.6"><path d="M38.1 188.5V195.8M38.1 203.4V210.7M27 199.6H34.3M41.9 199.6H49.2"/></g>
<!-- orange knife -->
<path d="M22.5 249C33 250.5 44 259 47 273.5" fill="none" stroke="#d8956b" stroke-width="3" stroke-linecap="round"/>
<path d="M40.3 251.3L51.3 244.3L46 254.8Z" fill="#d8956b"/>
<path d="M25 267.5L32 261.5L35.5 265L28.5 271Z" fill="#d8956b"/>
<!-- orange transform -->
<g fill="#d8956b"><rect x="32" y="301" width="12" height="12"/><path d="M38 290.5L41.5 295.5H34.5Z"/><path d="M38 323L41.5 318H34.5Z"/><path d="M21.5 307L26.5 303.5V310.5Z"/><path d="M54.5 307L49.5 303.5V310.5Z"/></g>
<circle cx="38" cy="307" r="15" fill="none" stroke="#d8956b" stroke-width="1.6" stroke-dasharray="15.56 8" stroke-dashoffset="19.56"/>
<!-- move -->
<g fill="#e0e0e0"><path d="M37.8 347.7L42.3 354H33.3Z"/><path d="M37.8 382.3L42.3 376H33.3Z"/><path d="M20.5 365L26.8 360.5V369.5Z"/><path d="M55.1 365L48.8 360.5V369.5Z"/>
<rect x="36.6" y="355.6" width="2.5" height="4"/><rect x="36.6" y="370.4" width="2.5" height="4"/><rect x="28.5" y="363.8" width="4.5" height="2.5"/><rect x="42.6" y="363.8" width="4.5" height="2.5"/></g>
<!-- rotate -->
<path d="M37.8 408L43.3 413.6L37.8 419.2L32.3 413.6Z" fill="#b8c4be"/>
<path d="M23.5 411A14.5 14.5 0 0 1 47.5 403.5M52 416.5A14.5 14.5 0 0 1 28.5 424.5" fill="none" stroke="#e0e0e0" stroke-width="1.6"/>
<g fill="#e0e0e0"><path d="M20.3 412.4H29L24.6 419.3Z"/><path d="M47.2 415.8H55.6L51.4 408.5Z"/></g>
<!-- scale -->
<path d="M26 457V451.6H50.6V476H40" fill="none" stroke="#b8c4be" stroke-width="1.5"/>
<rect x="24.5" y="464" width="13.6" height="13.3" fill="#e0e0e0"/>
<path d="M40 462.5L46 456.5" stroke="#e0e0e0" stroke-width="1.6"/><path d="M42 454.5H48.5V461Z" fill="#e0e0e0"/>
<!-- transform white -->
<g fill="#e0e0e0"><rect x="31.9" y="507.5" width="12.2" height="12.2"/><path d="M38 497L41.5 502H34.5Z"/><path d="M38 530L41.5 525H34.5Z"/><path d="M21.5 513.6L26.5 510V517.2Z"/><path d="M54.5 513.6L49.5 510V517.2Z"/></g>
<circle cx="38" cy="513.6" r="15" fill="none" stroke="#e0e0e0" stroke-width="1.6" stroke-dasharray="15.56 8" stroke-dashoffset="19.56"/>
<!-- annotate -->
<path d="M26.5 574L40.5 560L46 565.5L32 579.5Z" fill="#e0e0e0"/><path d="M41.5 559L43.5 557A2.5 2.5 0 0 1 47 557L48.5 558.5A2.5 2.5 0 0 1 48.5 562L46.5 564Z" fill="#e0e0e0"/><path d="M25.5 575L31 580.5L21 584Z" fill="#e0e0e0"/>
<path d="M23 582.5C29 587 34 584 39 580S49 575 56.5 583" fill="none" stroke="#b8c4be" stroke-width="1.5"/>
<!-- measure -->
<path d="M33 617.5A15.5 15.5 0 0 1 48.5 633H33Z" fill="#b8c4be"/>
<path d="M33 614.5A18.5 18.5 0 0 1 51.5 633" fill="none" stroke="#e0e0e0" stroke-width="1.3"/>
<path d="M25.5 603.8H33V633.2H55.2V638.6H25.5Z" fill="#e0e0e0"/>
<g stroke="#282828" stroke-width="0.8"><path d="M29 607h4M29 610h4M30 613h3M29 616h4M30 619h3M29 622h4M30 625h3M29 628h4M36 634v3M39 634.5v2.5M42 634v3M45 634.5v2.5M48 634v3M51 634.5v2.5"/></g>
<!-- add cube -->
<path d="M25 659.5V671M19.2 665.3H30.8" stroke="#b8c4be" stroke-width="2.6"/>
<g fill="none" stroke="#b8c4be" stroke-width="1.3"><path d="M27.5 675H47.5V695.5H27.5Z"/><path d="M27.5 675L35 668H55V688L47.5 695.5M47.5 675L55 668"/></g>
<!-- bevel -->
<rect x="25.3" y="723.5" width="25.5" height="25.3" fill="none" stroke="#e0e0e0" stroke-width="1.4"/>
<path d="M31.5 747V736L36.5 731H48.5V736.5H39L36.8 738.7V747Z" fill="#e0e0e0"/>
<!-- inset/triangle -->
<rect x="23.5" y="771" width="28.8" height="28.2" fill="none" stroke="#d0d8d4" stroke-width="1.8"/>
<rect x="33.5" y="779.5" width="11.5" height="11" fill="none" stroke="#d0d8d4" stroke-width="1.4"/>
<path d="M27 774.5V796.5H48Z" fill="#e0e0e0"/>
<!-- z ring -->
<g fill="#2d5a3a"><rect x="20" y="823.5" width="7" height="10" rx="2"/><rect x="20" y="836" width="7" height="9.5" rx="2"/><rect x="32.3" y="847" width="10.5" height="6.5" rx="2"/></g>
<path d="M28.7 831.8A9.5 9.5 0 0 1 40.9 826.1" fill="none" stroke="#2d5a3a" stroke-width="3.4"/>
<path d="M40.9 826.1A9.5 9.5 0 1 1 28.7 831.8" fill="none" stroke="#f0f0f0" stroke-width="3.4"/>
<path d="M33.8 830.8H41L34 839.2H41.3" fill="none" stroke="#2d5a3a" stroke-width="2"/>
<g fill="none" stroke="#e0e0e0" stroke-width="1.3"><path d="M33.5 822.5V817H42.5V822.5"/><path d="M48 824H54.5V832H48M48 837H54.5V845H48"/></g>
</svg>
<!-- overlay text -->
<div class="t ov" style="left:96px;top:129px;letter-spacing:0.17px">User Perspective</div>
<div class="t ov" style="left:96px;top:157px;letter-spacing:0.28px">(1) Scene Collection | Cube</div>
<div class="t ov" style="left:96px;top:198px">Objects</div><div class="t ov" style="left:182px;top:198px">0 / 1</div>
<div class="t ov" style="left:96px;top:224px">Vertices</div><div class="t ov" style="left:182px;top:224px">8</div>
<div class="t ov" style="left:96px;top:250px">Edges</div><div class="t ov" style="left:182px;top:250px">12</div>
<div class="t ov" style="left:96px;top:275px">Faces</div><div class="t ov" style="left:182px;top:275px">6</div>
<div class="t ov" style="left:96px;top:301px">Triangles</div><div class="t ov" style="left:182px;top:301px">12</div>
<!-- options -->
<div class="a" style="left:873px;top:83px;width:95px;height:27px;background:#282828;border-radius:5px"></div>
<div class="t" style="left:884px;top:88px;color:#e6e6e6">Options</div>
<div class="a" style="left:967px;top:136px;width:12px;height:20px;background:#393939;border-radius:5px 0 0 5px"></div>
<svg class="a" style="left:0;top:39px" width="979" height="830" viewBox="0 39 979 830">
<path d="M955 95l4.3 4.3 4.3-4.3" fill="none" stroke="#e0e0e0" stroke-width="1.4"/>
<path d="M976 141l-4.6 4.6 4.6 4.6" fill="none" stroke="#aaa" stroke-width="1.6"/>
<!-- nav gizmo -->
<g stroke-width="1.3">
<circle cx="875.3" cy="167.5" r="10.5" fill="#4a3a3d" stroke="#b23b50"/>
<circle cx="865.8" cy="205.2" r="11.6" fill="#32401c" stroke="#7fb328"/>
<circle cx="904.4" cy="228" r="10.5" fill="#394150" stroke="#3187d0"/>
</g>
<path d="M903.5 188.7L904 149" stroke="#3d8ae0" stroke-width="2"/>
<path d="M903.5 188.7L942.5 172.5" stroke="#6ca024" stroke-width="2.2"/>
<path d="M903.5 188.7L932.5 210.2" stroke="#e0405a" stroke-width="2.2"/>
<circle cx="903.5" cy="149" r="12.5" fill="#3d8ae0"/>
<circle cx="942.5" cy="172.5" r="11.8" fill="#6a9c22"/>
<circle cx="932.5" cy="210.2" r="12.5" fill="#db3b56"/>
<g fill="none" stroke="#1a1a1a" stroke-width="2.1" stroke-linejoin="miter">
<path d="M898.5 143.5H908.5L898.5 154.5H908.5"/>
<path d="M937.5 166L942.5 172.5L947.5 166M942.5 172.5V179"/>
<path d="M927.5 204L937.5 216.5M937.5 204L927.5 216.5"/>
</g>
<!-- nav buttons -->
<g fill="rgba(30,30,30,0.38)"><circle cx="945" cy="270" r="20.5"/><circle cx="945" cy="315.5" r="20.5"/><circle cx="945" cy="361" r="20.5"/><circle cx="945" cy="405.5" r="20.5"/></g>
<circle cx="947.3" cy="269" r="9.8" fill="#e0e0e0"/>
<path d="M947.3 264v10M942.3 269h10" stroke="#333" stroke-width="1.4"/>
<path d="M940.5 276L934.5 282" stroke="#e0e0e0" stroke-width="2.8" stroke-linecap="round"/>
<path d="M939.5 319.5L935 316C933.5 315 932 316.5 933 318L939.5 325C941.5 327 944 328 946.5 328C951.5 328 954.5 324 955 319L957 310C957.3 308.3 955.3 307.8 954.8 309.5L953 316V306.5C953 304.5 950.5 304.5 950.5 306.5V314.5V304.5C950.5 302.3 947.5 302.3 947.5 304.5V314.5V305.5C947.5 303.3 944.5 303.3 944.5 305.5V315.5V308C944.5 306 941.8 306 941.8 308V319Z" fill="#e0e0e0"/>
<circle cx="938.5" cy="357.3" r="5.4" fill="#e0e0e0"/><circle cx="949.5" cy="355.8" r="5.6" fill="#e0e0e0"/>
<circle cx="938.5" cy="357.8" r="1.2" fill="none" stroke="#333" stroke-width="0.9"/><circle cx="949.8" cy="355.5" r="1.2" fill="none" stroke="#333" stroke-width="0.9"/>
<rect x="936.5" y="363" width="15" height="10" rx="1" fill="#e0e0e0"/><path d="M951 368L957.5 363.5V373L951 368.5" fill="#e0e0e0"/>
<path d="M935 365H939" stroke="#333" stroke-width="1"/>
<g fill="none" stroke="#e0e0e0" stroke-width="1.5" stroke-linejoin="round"><path d="M936.3 396.5H953.7L956.5 415H933.5Z"/><path d="M941.8 396.5L940.3 415M948.2 396.5L949.7 415M935.6 402.5H954.4M934.6 408.5H955.4"/></g>
<!-- checker button -->
<circle cx="106.1" cy="472.9" r="20.5" fill="rgba(30,30,30,0.38)"/>
<path d="M95.5 462.5H117V481.2H103V484H97.5A2 2 0 0 1 95.5 482Z" fill="#e0e0e0"/>
<path d="M98 464.5H104V481" stroke="#333" stroke-width="1.3" fill="none"/>
<g fill="#333"><rect x="104.5" y="464.5" width="3" height="2.5"/><rect x="110" y="464.5" width="2.5" height="2.5"/><rect x="107.5" y="467" width="2.5" height="2.5"/><rect x="104.5" y="469.5" width="3" height="2.5"/><rect x="110" y="469.5" width="2.5" height="2.5"/><rect x="107.5" y="472" width="2.5" height="2.5"/><rect x="104.5" y="474.5" width="3" height="2.5"/><rect x="110" y="474.5" width="2.5" height="2.5"/><rect x="107.5" y="477" width="2.5" height="2.5"/></g>
<!-- bottom buttons -->
<rect x="792" y="816" width="178" height="46" rx="23" fill="#474747"/>
<g fill="#2f2f2f"><circle cx="814.7" cy="838.7" r="19.6"/><circle cx="857.6" cy="838.7" r="19.6"/><circle cx="900.4" cy="838.7" r="19.6"/><circle cx="946.8" cy="838.7" r="19.6"/></g>
<rect x="810" y="843" width="10.5" height="4" fill="#dadada"/>
<rect x="850.5" y="832" width="14" height="14" fill="none" stroke="#dadada" stroke-width="1.6"/>
<path d="M894.5 832.5L906.5 845.5M906.5 832.5L894.5 845.5" stroke="#dadada" stroke-width="2.4"/>
<path d="M943 832.5L949 838.7L943 845" fill="none" stroke="#dadada" stroke-width="1.6"/>
<!-- mouse cursor -->
<path d="M932.5 814V831L936.5 827L939.5 833.5L942 832.5L939 826H944.5Z" fill="#fff" stroke="#000" stroke-width="1"/>
</svg>
<div id="ol" class="a">
 <div class="a" style="left:0;top:67px;width:449px;height:29px;background:#2b2b2b"></div>
 <div class="a" style="left:0;top:125px;width:449px;height:29px;background:#2b2b2b"></div>
 <div class="a" style="left:0;top:183px;width:449px;height:29px;background:#2b2b2b"></div>
 <div class="a" style="left:0;top:241px;width:449px;height:29px;background:#2b2b2b"></div>
 <div class="a" style="left:0;top:299px;width:449px;height:29px;background:#2b2b2b"></div>
</div>
<div class="a" style="left:993px;top:43px;width:46px;height:29px;border:1px solid #3a3a3a;border-radius:6px"></div>
<div class="a" style="left:1047px;top:43px;width:45px;height:29px;border:1px solid #3a3a3a;border-radius:6px"></div>
<div class="a" style="left:1114px;top:43px;width:173px;height:29px;border:1px solid #3a3a3a;border-radius:6px;background:#1d1d1d"></div>
<div class="a" style="left:1342px;top:43px;width:46px;height:29px;border:1px solid #3a3a3a;border-radius:6px"></div>
<div class="a" style="left:1395px;top:43px;width:29px;height:29px;border-radius:6px;background:#545454"></div>
<div class="a" style="left:1011px;top:78px;width:29px;height:27px;border-radius:6px;background:#545454"></div>
<div class="a" style="left:1040px;top:107px;width:29px;height:27px;border-radius:6px;background:#545454"></div>
<div class="t" style="left:1044.5px;top:84px;color:#d4d4d4">Scene Collection</div>
<div class="t" style="left:1073.5px;top:113px;color:#d4d4d4">Cube</div>
<svg class="a" style="left:982px;top:39px" width="449" height="100" viewBox="982 39 449 100">
<!-- display mode -->
<rect x="1000" y="47.5" width="8" height="4" fill="#dcdcdc"/>
<path d="M1003.5 51.5V64.5H1010M1003.5 58H1010" fill="none" stroke="#999" stroke-width="1.2"/>
<rect x="1010.5" y="56" width="10.5" height="4.5" fill="#dcdcdc"/><rect x="1010.5" y="63" width="10.5" height="4.5" fill="#dcdcdc"/>
<path d="M1025 56.5l3.3 3.3 3.3-3.3" fill="none" stroke="#dcdcdc" stroke-width="1.3"/>
<!-- display filter (view layer icon) -->
<g stroke="#c8c8c8" stroke-width="1.2" fill="none"><path d="M1053.5 55v12h13"/><path d="M1056 52v12h13"/></g>
<rect x="1059" y="47.5" width="13.5" height="13.5" fill="#282828" stroke="#dcdcdc" stroke-width="1.3"/>
<path d="M1060 60.5l4.5-7.5 3 4 1.5-1.5 2.5 5z" fill="#dcdcdc"/><circle cx="1069.5" cy="51" r="1.2" fill="#dcdcdc"/>
<path d="M1078 56.5l3.3 3.3 3.3-3.3" fill="none" stroke="#dcdcdc" stroke-width="1.3"/>
<!-- search -->
<circle cx="1135.5" cy="54.5" r="6.8" fill="none" stroke="#dcdcdc" stroke-width="1.4"/>
<path d="M1130.5 59.5L1122 68" stroke="#dcdcdc" stroke-width="1.4"/>
<!-- filter -->
<path d="M1346 47.5H1367L1359 58V65L1355.5 68V58Z" fill="none" stroke="#dcdcdc" stroke-width="1.3" stroke-linejoin="round"/>
<path d="M1373.5 57l3.3 3.3 3.3-3.3" fill="none" stroke="#dcdcdc" stroke-width="1.3"/>
<!-- new collection -->
<g fill="none" stroke="#bbb" stroke-width="1.2"><path d="M1399 51.5h9v3.5h-9z"/><path d="M1400.5 55v11.5h15V60"/><path d="M1406 60h4"/></g>
<circle cx="1414.5" cy="52.5" r="5" fill="#dcdcdc"/><path d="M1414.5 49.5v6M1411.5 52.5h6" stroke="#545454" stroke-width="1.4"/>
<!-- scene collection icon -->
<rect x="1015" y="84.5" width="21" height="5" fill="#dcdcdc"/>
<path d="M1016 91h19v10.5h-19z" fill="#dcdcdc"/><rect x="1022.5" y="93" width="6" height="2" rx="1" fill="#545454"/>
<!-- cube row -->
<path d="M1021.3 116.9L1030.4 120.8L1021.3 124.8Z" fill="#bbb"/>
<path d="M1044.5 110.5H1065.5L1055 131.5Z" fill="#d4895e"/>
<path d="M1051 114.5H1059L1055 122.5Z" fill="#545454"/>
<g fill="none" stroke="#3a9ac0" stroke-width="1.3"><path d="M1150.5 113.5H1167L1158.8 128.5Z"/><rect x="1148.5" y="111" width="4" height="4" fill="#282828"/><rect x="1165" y="111" width="4" height="4" fill="#282828"/><rect x="1156.8" y="126.5" width="4" height="4" fill="#282828"/></g>
<path d="M1367 120C1370 115 1373.5 113 1377 113S1384 115 1387 120C1384 125 1380.5 127 1377 127S1370 125 1367 120Z" fill="#e8e8e8"/>
<circle cx="1377" cy="120" r="3.5" fill="#2b2b2b"/><circle cx="1377" cy="120" r="1.7" fill="#e8e8e8"/>
<path d="M1396 114h4.5l1.5-2.5h7l1.5 2.5h5.5v14h-20z" fill="#e8e8e8"/>
<circle cx="1406" cy="121" r="4.6" fill="#2b2b2b"/><circle cx="1406" cy="121" r="3.2" fill="#e8e8e8"/><circle cx="1406" cy="121" r="1.9" fill="#2b2b2b"/>
</svg>
<div id="pr" class="a">
 <div class="a" style="left:0;top:37px;width:42px;height:447px;background:#1d1d1d;border-radius:0 0 0 6px"></div>
 <div class="a" style="left:3px;top:352px;width:39px;height:37px;background:#303030;border-radius:6px 0 0 6px"></div>
</div>
<div class="a" style="left:993px;top:390px;width:46px;height:28px;border:1px solid #3a3a3a;border-radius:6px;background:#282828"></div>
<div class="a" style="left:1122px;top:390px;width:172px;height:28px;border:1px solid #3a3a3a;border-radius:6px;background:#1d1d1d"></div>
<div class="a" style="left:1396px;top:390px;width:28px;height:28px;border:1px solid #3a3a3a;border-radius:6px;background:#282828"></div>
<div class="a" style="left:1037px;top:488px;width:386px;height:28px;border:1px solid #3a3a3a;border-radius:6px;background:#282828"></div>
<div class="t" style="left:1075px;top:439px;color:#e6e6e6">Cube</div>
<div class="t" style="left:1048px;top:492px;color:#e6e6e6">Add Modifier</div>
<svg class="a" style="left:982px;top:385px" width="449" height="484" viewBox="982 385 449 484">
<!-- editor type -->
<rect x="1000" y="393" width="21.5" height="9.2" rx="4.6" fill="#dcdcdc"/><path d="M1010 394.5h7a3.1 3.1 0 0 1 0 6.2h-7z" fill="#282828"/>
<rect x="1000" y="405" width="21.5" height="9.2" rx="4.6" fill="#dcdcdc"/><path d="M1014 406.5h3a3.1 3.1 0 0 1 0 6.2h-3z" fill="#282828"/>
<path d="M1025.5 402l4.2 4.2 4.2-4.2" fill="none" stroke="#dcdcdc" stroke-width="1.3"/>
<circle cx="1142" cy="400.5" r="7" fill="none" stroke="#dcdcdc" stroke-width="1.6"/>
<path d="M1137 405.5L1129 413.5" stroke="#dcdcdc" stroke-width="1.6" stroke-linecap="round"/>
<path d="M1405.5 402l3.5 3.5 3.5-3.5" fill="none" stroke="#dcdcdc" stroke-width="1.3"/>
<!-- object icon -->
<g fill="none" stroke="#aaa" stroke-width="1.3"><path d="M1041 442v-4h4M1057 438h4v4M1061 454v4h-4M1045 458h-4v-4"/></g>
<rect x="1045" y="442" width="12" height="12" fill="#e0e0e0"/>
<g transform="translate(1410,448) rotate(45)" stroke="#8a8a8a" stroke-width="1.5" fill="none" stroke-linejoin="round"><path d="M-4 -9h8M-2.5 -9v6l-4 4h13l-4 -4v-6M0 1v10"/></g>
<path d="M1409 500l4.5 4.5 4.5-4.5" fill="none" stroke="#dcdcdc" stroke-width="1.3"/>
<!-- tabs -->
<g fill="#a8a8a8">
 <rect x="997.3" y="443.5" width="1.6" height="9"/><path d="M994 454.5h8v5.5a4 4 0 0 1 -8 0z"/>
 <circle cx="1010.3" cy="448.8" r="5.3"/><rect x="1008.1" y="451" width="4.4" height="13.5" rx="2.2"/>
 <path d="M994.2 498.2h4.8v-3.5h7.5v3.5h9.1v15.5h-21.4z"/><rect x="1011" y="494.5" width="3" height="1.2"/>
 <path d="M994.8 542V538a3 3 0 0 1 3 -3h14.6a3 3 0 0 1 3 3v4z"/>
 <rect x="999.3" y="543" width="12.5" height="11.5"/>
 <path d="M999 577h16v14h-16z"/><path d="M996.5 580v13.5h14" fill="none" stroke="#a8a8a8" stroke-width="1.2"/><path d="M994 582.5v13.5h14" fill="none" stroke="#a8a8a8" stroke-width="1.2"/>
 <path d="M994.8 625.5L999.5 614.3L1004.6 624.5A5 5 0 0 1 994.8 625.5Z"/><circle cx="1012.7" cy="617.5" r="3"/>
</g>
<g fill="#1d1d1d"><rect x="1008.6" y="442" width="3.4" height="6.5" rx="1.2"/><circle cx="1010.3" cy="461.5" r="0.9"/><rect x="985" y="474" width="39" height="1" fill="#262626"/><rect x="996" y="500.7" width="13" height="10"/><circle cx="1012.2" cy="503.3" r="1.1"/><circle cx="1012.2" cy="509.3" r="1.1"/><path d="M1002 553l3-5.5 3 5.5z"/><circle cx="1008.5" cy="546.5" r="1.2"/>
<path d="M1001 588l4-6 3 3 2-2 3 5z"/></g>
<g fill="#a8a8a8"><rect x="997.5" y="502.5" width="10" height="1.5"/><rect x="997.5" y="505.2" width="10" height="1.5"/><rect x="997.5" y="507.9" width="10" height="1.5"/></g>
<circle cx="1009.1" cy="628.4" r="6" fill="#1d1d1d" stroke="#a8a8a8" stroke-width="1.5"/>
<circle cx="1009.1" cy="628.4" r="3.6" fill="none" stroke="#a8a8a8" stroke-width="1.2"/>
<circle cx="1005" cy="665.2" r="9" fill="none" stroke="#c85058" stroke-width="1.6"/>
<path d="M997.5 660.5C999 657 1003 656 1006 657.5L1004.5 661L1007 663.5L1003 666.5L999.5 665.5Z" fill="#c85058"/>
<path d="M1005 668.5L1009.5 667L1012.5 670.5L1009 674L1006.5 673Z" fill="#c85058"/>
<path d="M994.8 675L1015.4 655" stroke="#c85058" stroke-width="1.5"/>
<g fill="none" stroke="#c08a66" stroke-width="1.3"><path d="M996 710v-3h3M1012 707h3v3M1015 721v3h-3M999 724h-3v-3"/></g>
<rect x="999.5" y="710.5" width="12" height="11" fill="#d9956a"/>
<path d="M1011 746.5a6 6 0 0 0 -5 8.5l-9 9a2.3 2.3 0 0 0 3 3l9 -9a6 6 0 0 0 8.5 -5l-3.5 2.5-2.5-1-1-2.5z" fill="#4a90e0"/>
<g fill="#4a90e0"><circle cx="997" cy="788" r="2.6"/><circle cx="1014" cy="788.5" r="2"/><circle cx="1014" cy="802.5" r="2.6"/><circle cx="997.5" cy="802.5" r="1.8"/></g>
<path d="M997 788H1014M997 788L1014 802.5M997.5 788V802.5" stroke="#4a90e0" stroke-width="1.2"/>
<path d="M1013.4 834A8.5 8.5 0 1 1 1007.9 827.5" fill="none" stroke="#4a88d8" stroke-width="1.4"/>
<circle cx="1005" cy="835.5" r="4" fill="#4a88d8"/><circle cx="1012.8" cy="828" r="2.6" fill="#4a88d8"/>
<path d="M996 869c3-4 8-7 14-5" fill="none" stroke="#4a90e0" stroke-width="1.5"/>
</svg>
<div id="sb" class="a"></div>
<div class="t" style="left:46px;top:876px;color:#9a9a9a">Select</div>
<div class="t" style="left:746px;top:876px;color:#9a9a9a">Object Context Menu</div>
<div class="t" style="left:1095px;top:876px;color:#9a9a9a;letter-spacing:0.3px">Scene Collection | Cube | Verts:8 | Faces:6</div>
<svg class="a" style="left:0;top:869px" width="1431" height="28" viewBox="0 869 1431 28">
<g fill="none" stroke="#9a9a9a" stroke-width="1.4">
 <path d="M23 875.7H25.3A4.2 4.2 0 0 1 29.5 879.9V897M14.2 886.5V897"/>
 <path d="M364 897V880A4.5 4.5 0 0 1 368.5 875.5H374.3A4.5 4.5 0 0 1 378.8 880V897"/>
 <path d="M720.6 875.7H718.3A4.2 4.2 0 0 0 714.1 879.9V897M729.4 886.5V897"/>
</g>
<path d="M13.5 884.5V879.5A4.5 4.5 0 0 1 18 875H21.3V884.5Z" fill="#9a9a9a"/>
<rect x="369.6" y="878.3" width="3.6" height="7.5" rx="1.8" fill="#9a9a9a"/>
<path d="M730.1 884.5V879.5A4.5 4.5 0 0 0 725.6 875H722.3V884.5Z" fill="#9a9a9a"/>
</svg>
</body></html>
